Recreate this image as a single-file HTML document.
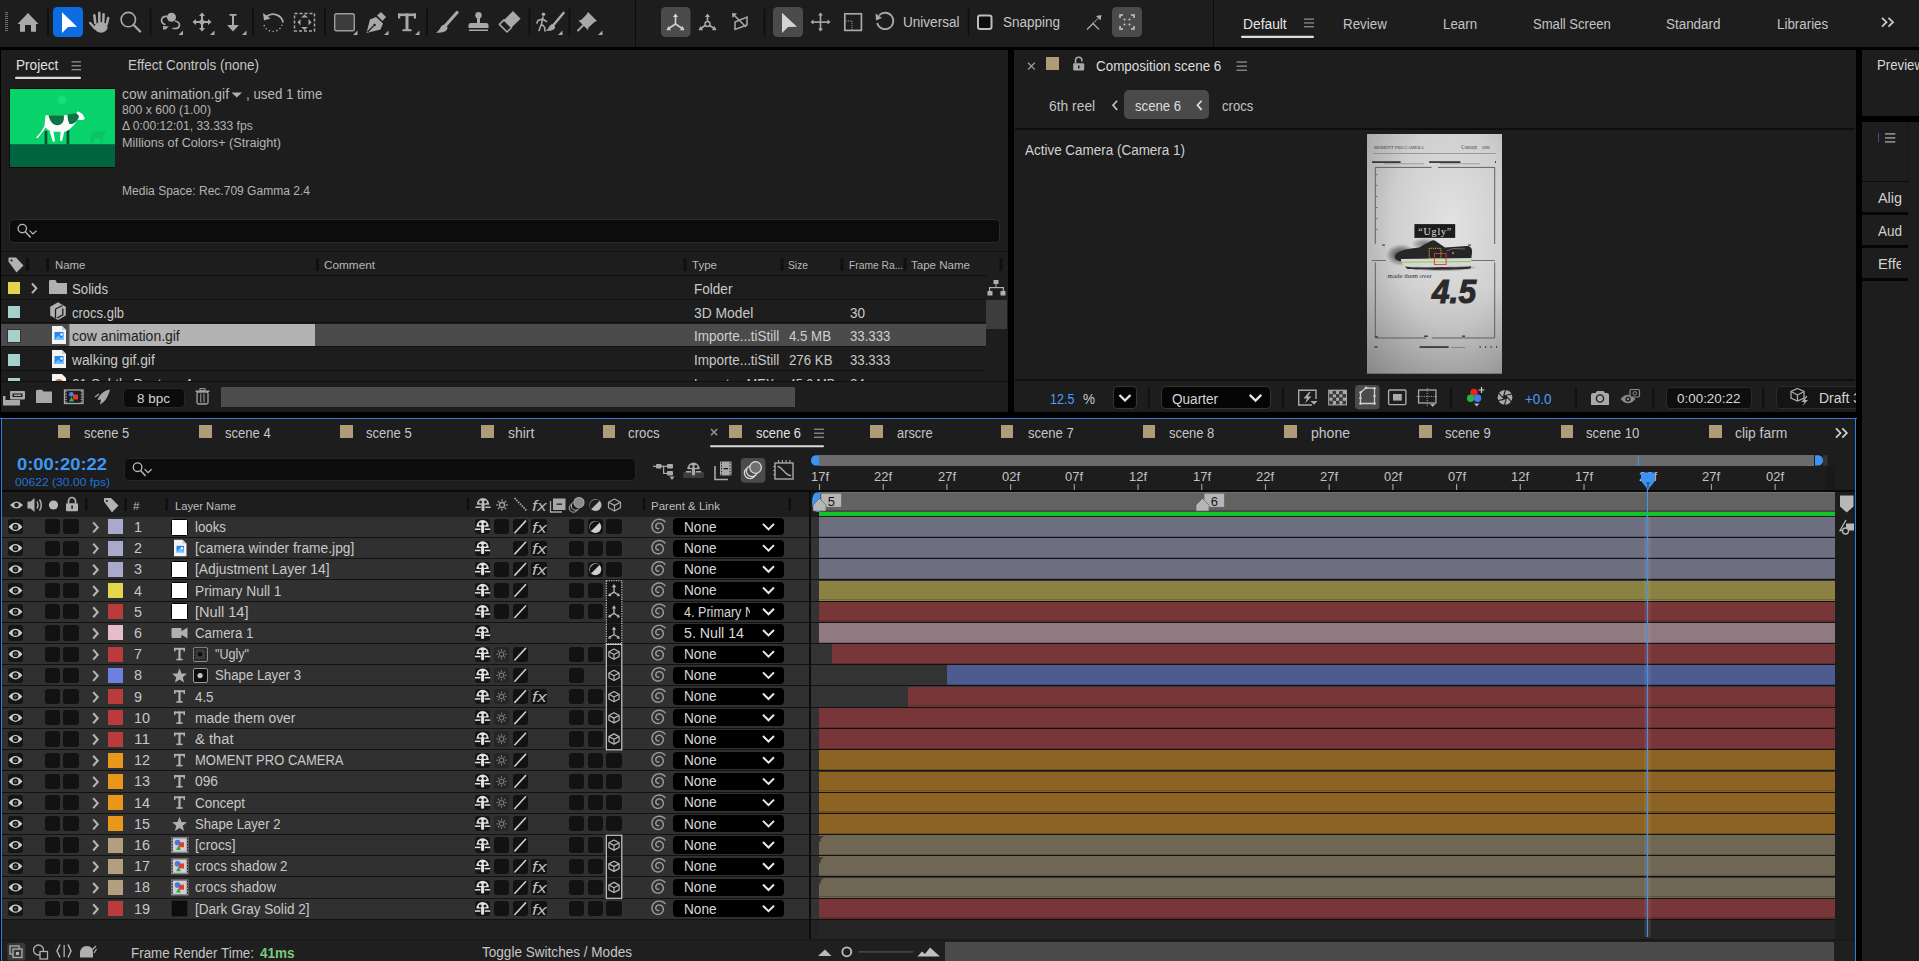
<!DOCTYPE html><html><head><meta charset="utf-8"><title>After Effects</title><style>
html,body{margin:0;padding:0;width:1919px;height:961px;overflow:hidden;background:#1d1d1d;}
body{position:relative;font-family:"Liberation Sans",sans-serif;}
body>div,body>svg{position:absolute;box-sizing:border-box;}
.t{line-height:0;white-space:pre;}

</style></head><body>
<div style="left:0px;top:47px;width:1919px;height:3px;background:#000;"></div>
<div style="left:0px;top:0px;width:1919px;height:47px;background:#1d1d1d;"></div>
<div style="left:635px;top:0px;width:1px;height:47px;background:#0c0c0c;"></div>
<div style="left:1213px;top:0px;width:1px;height:47px;background:#0c0c0c;"></div>
<div style="left:0px;top:50px;width:1919px;height:368px;background:#000;"></div>
<div style="left:1px;top:50px;width:1007px;height:362px;background:#1d1d1d;"></div>
<div style="left:1014px;top:50px;width:842px;height:362px;background:#1d1d1d;"></div>
<div style="left:1862px;top:50px;width:57px;height:66px;background:#1d1d1d;"></div>
<div style="left:1862px;top:122px;width:57px;height:839px;background:#1d1d1d;"></div>
<div style="left:0px;top:418px;width:1862px;height:543px;background:#000;"></div>
<div style="left:1px;top:418px;width:1855px;height:543px;background:#1d1d1d;"></div>
<div class="t" style="left:903.00px;top:22.05px;font-size:14px;color:#c6c6c6;transform:scaleX(0.9681);transform-origin:0 0;">Universal</div>
<div class="t" style="left:1003.00px;top:22.05px;font-size:14px;color:#c6c6c6;transform:scaleX(0.9633);transform-origin:0 0;">Snapping</div>
<div class="t" style="left:1243.00px;top:25.12px;font-size:13.8px;color:#e6e6e6;transform:scaleX(0.9996);transform-origin:0 0;">Default</div>
<div class="t" style="left:1342.80px;top:25.22px;font-size:13.8px;color:#c4c4c4;transform:scaleX(0.9680);transform-origin:0 0;">Review</div>
<div class="t" style="left:1442.80px;top:25.22px;font-size:13.8px;color:#c4c4c4;transform:scaleX(0.9661);transform-origin:0 0;">Learn</div>
<div class="t" style="left:1532.70px;top:25.22px;font-size:13.8px;color:#c4c4c4;transform:scaleX(0.9481);transform-origin:0 0;">Small Screen</div>
<div class="t" style="left:1666.20px;top:25.22px;font-size:13.8px;color:#c4c4c4;transform:scaleX(0.9732);transform-origin:0 0;">Standard</div>
<div class="t" style="left:1776.60px;top:25.22px;font-size:13.8px;color:#c4c4c4;transform:scaleX(0.9675);transform-origin:0 0;">Libraries</div>
<div class="t" style="left:16.20px;top:65.52px;font-size:13.8px;color:#e2e2e2;transform:scaleX(0.9871);transform-origin:0 0;">Project</div>
<div class="t" style="left:127.70px;top:65.52px;font-size:13.8px;color:#c6c6c6;transform:scaleX(0.9780);transform-origin:0 0;">Effect Controls (none)</div>
<div style="left:8.7px;top:87.7px;width:106.6px;height:80.3px;background:#0b0b0b;"></div>
<svg style="left:9.8px;top:88.8px;" width="105" height="78.2" viewBox="0 0 105 78.2"><rect width="105" height="78.2" fill="#08d36a"/><rect y="55.2" width="105" height="23" fill="#01663f"/><circle cx="52.2" cy="10.8" r="4.4" fill="#12e275"/><path d="M80.4,54.5 L81,46 C82,42.5 86,42 92,42.2 L96.8,40 L94.5,45 L93,47 L92.5,54.5 L90.5,54.5 L90,49 L84,49 L83,54.5 Z" fill="#0cc45f"/><path d="M34.6,42 L37.3,42 L37.3,55.2 L34.6,55.2 Z M56.6,41 L59.3,41 L59.3,55.2 L56.6,55.2 Z" fill="#064f30"/><path d="M26,48.5 C30,44.5 33,40.5 34.5,36.5 L35.5,26.3 L55.4,26.3 L66,24.3 L68,22.3 L72.5,25 L75,29.5 L73,31 L67.5,31 C64.5,36 60,41 55,42.8 L44,42.8 C40,42.3 37,40.5 35.5,38.5 C33.5,42.5 30,46.5 27.5,49.3 Z" fill="#fafafa"/><path d="M39.5,42 L43.5,42 L45,52.3 L43,53 Z M50.5,42 L54.5,42 L52,52.3 L50,51.5 Z" fill="#fafafa"/><path d="M38.5,26.3 L53.8,26.3 C54.5,31 53,35.5 48,36.2 C43,36.5 40,33 38.5,26.3 Z" fill="#0b7444"/><path d="M57.5,25.5 L66,24 L69,27 C68,32 64,35.5 59.5,35 C58,32 57.5,29 57.5,25.5 Z" fill="#0b7444"/></svg>
<div class="t" style="left:122.10px;top:95.12px;font-size:13.8px;color:#b8b8b8;transform:scaleX(1.0037);transform-origin:0 0;">cow animation.gif</div>
<div class="t" style="left:245.90px;top:95.12px;font-size:13.8px;color:#b8b8b8;transform:scaleX(0.9658);transform-origin:0 0;">, used 1 time</div>
<div class="t" style="left:122.10px;top:110.14px;font-size:12px;color:#b4b4b4;transform:scaleX(1.0182);transform-origin:0 0;">800 x 600 (1.00)</div>
<div class="t" style="left:122.10px;top:126.34px;font-size:12px;color:#b4b4b4;transform:scaleX(1.0044);transform-origin:0 0;">Δ 0:00:12:01, 33.333 fps</div>
<div class="t" style="left:122.10px;top:142.94px;font-size:12px;color:#b4b4b4;transform:scaleX(1.0525);transform-origin:0 0;">Millions of Colors+ (Straight)</div>
<div class="t" style="left:122.10px;top:191.44px;font-size:12px;color:#b4b4b4;transform:scaleX(1.0030);transform-origin:0 0;">Media Space: Rec.709 Gamma 2.4</div>
<div style="left:9.4px;top:219.2px;width:991px;height:24px;background:#0c0c0c;border:1px solid #2a2a2a;border-radius:5px"></div>
<div style="left:1px;top:251.2px;width:1007px;height:1px;background:#121212;"></div>
<div style="left:1px;top:274.8px;width:985px;height:1px;background:#0c0c0c;"></div>
<div class="t" style="left:55.00px;top:264.91px;font-size:11.8px;color:#b9b9b9;transform:scaleX(0.9660);transform-origin:0 0;">Name</div>
<div class="t" style="left:324.40px;top:264.91px;font-size:11.8px;color:#b9b9b9;transform:scaleX(0.9973);transform-origin:0 0;">Comment</div>
<div class="t" style="left:692.00px;top:264.91px;font-size:11.8px;color:#b9b9b9;transform:scaleX(0.9774);transform-origin:0 0;">Type</div>
<div class="t" style="left:788.00px;top:264.91px;font-size:11.8px;color:#b9b9b9;transform:scaleX(0.8713);transform-origin:0 0;">Size</div>
<div class="t" style="left:848.50px;top:264.91px;font-size:11.8px;color:#b9b9b9;transform:scaleX(0.8702);transform-origin:0 0;">Frame Ra...</div>
<div class="t" style="left:910.60px;top:264.91px;font-size:11.8px;color:#b9b9b9;transform:scaleX(0.9780);transform-origin:0 0;">Tape Name</div>
<div style="left:1px;top:298.5px;width:985px;height:1px;background:#111111;"></div>
<div style="left:1px;top:322.3px;width:985px;height:1px;background:#111111;"></div>
<div style="left:1px;top:346.1px;width:985px;height:1px;background:#111111;"></div>
<div style="left:1px;top:369.9px;width:985px;height:1px;background:#111111;"></div>
<div style="left:1px;top:393.7px;width:985px;height:1px;background:#111111;"></div>
<div style="left:1px;top:323.6px;width:985px;height:22.8px;background:#4b4b4b;"></div>
<div style="left:69.4px;top:323.6px;width:246px;height:22.8px;background:#b3b3b3;"></div>
<div style="left:8px;top:282.4px;width:11.6px;height:11.6px;background:#e3d44b;"></div>
<div class="t" style="left:72.00px;top:289.72px;font-size:13.8px;color:#c9c9c9;transform:scaleX(0.9580);transform-origin:0 0;">Solids</div>
<div class="t" style="left:693.80px;top:289.72px;font-size:13.8px;color:#c9c9c9;transform:scaleX(0.9819);transform-origin:0 0;">Folder</div>
<div style="left:8px;top:305.6px;width:12px;height:12px;background:#a6d0cc;"></div>
<div class="t" style="left:72.20px;top:314.32px;font-size:13.8px;color:#c9c9c9;transform:scaleX(0.9417);transform-origin:0 0;">crocs.glb</div>
<div class="t" style="left:693.80px;top:314.32px;font-size:13.8px;color:#c9c9c9;transform:scaleX(1.0040);transform-origin:0 0;">3D Model</div>
<div class="t" style="left:850.00px;top:314.32px;font-size:13.8px;color:#c9c9c9;transform:scaleX(0.9766);transform-origin:0 0;">30</div>
<div style="left:7.2px;top:329px;width:13.5px;height:13.5px;background:#a6d0cc;border:1px solid #333;"></div>
<div class="t" style="left:72.20px;top:336.82px;font-size:13.8px;color:#1e1e1e;transform:scaleX(1.0107);transform-origin:0 0;">cow animation.gif</div>
<div class="t" style="left:693.80px;top:336.82px;font-size:13.8px;color:#cfcfcf;transform:scaleX(0.9759);transform-origin:0 0;">Importe...tiStill</div>
<div class="t" style="left:789.30px;top:336.82px;font-size:13.8px;color:#cfcfcf;transform:scaleX(0.9607);transform-origin:0 0;">4.5 MB</div>
<div class="t" style="left:850.00px;top:336.82px;font-size:13.8px;color:#cfcfcf;transform:scaleX(0.9549);transform-origin:0 0;">33.333</div>
<div style="left:8px;top:353.7px;width:12px;height:12px;background:#a6d0cc;"></div>
<div class="t" style="left:72.20px;top:360.62px;font-size:13.8px;color:#c9c9c9;transform:scaleX(0.9991);transform-origin:0 0;">walking gif.gif</div>
<div class="t" style="left:693.80px;top:360.62px;font-size:13.8px;color:#c9c9c9;transform:scaleX(0.9759);transform-origin:0 0;">Importe...tiStill</div>
<div class="t" style="left:789.30px;top:360.62px;font-size:13.8px;color:#c9c9c9;transform:scaleX(0.9610);transform-origin:0 0;">276 KB</div>
<div class="t" style="left:850.00px;top:360.62px;font-size:13.8px;color:#c9c9c9;transform:scaleX(0.9549);transform-origin:0 0;">33.333</div>
<div style="left:8px;top:377.5px;width:12px;height:12px;background:#a6d0cc;"></div>
<svg style="left:52px;top:374px;" width="14" height="18" viewBox="0 0 14 18"><path d="M0,0 L10,0 L14,4 L14,18 L0,18 Z" fill="#f4f4f4"/><circle cx="7" cy="9" r="4" fill="#e07030"/></svg>
<div class="t" style="left:72.20px;top:385.22px;font-size:13.8px;color:#c9c9c9;transform:scaleX(0.9902);transform-origin:0 0;">01 Subtle Dust.mp4</div>
<div class="t" style="left:693.80px;top:385.22px;font-size:13.8px;color:#c9c9c9;transform:scaleX(0.9073);transform-origin:0 0;">Importe...MEX</div>
<div class="t" style="left:789.30px;top:385.22px;font-size:13.8px;color:#c9c9c9;transform:scaleX(0.8951);transform-origin:0 0;">45.2 MB</div>
<div class="t" style="left:850.00px;top:385.22px;font-size:13.8px;color:#c9c9c9;transform:scaleX(0.9766);transform-origin:0 0;">24</div>
<div style="left:1px;top:381px;width:1007px;height:31px;background:#1d1d1d;"></div>
<div style="left:1px;top:380.6px;width:1007px;height:1px;background:#101010;"></div>
<div style="left:986px;top:300px;width:21px;height:28.5px;background:#3d3d3d;"></div>
<div style="left:123px;top:387.5px;width:61.5px;height:20.5px;background:#0b0b0b;border:1px solid #262626;border-radius:4px"></div>
<div class="t" style="left:137.00px;top:399.03px;font-size:13.2px;color:#d2d2d2;transform:scaleX(1.0228);transform-origin:0 0;">8 bpc</div>
<div style="left:221px;top:387.2px;width:574px;height:20px;background:#4c4c4c;"></div>
<div style="left:1046px;top:57px;width:13px;height:13px;background:#ad9b7a;"></div>
<div class="t" style="left:1095.60px;top:67.42px;font-size:13.8px;color:#dedede;transform:scaleX(0.9725);transform-origin:0 0;">Composition scene 6</div>
<div class="t" style="left:1049.40px;top:106.82px;font-size:13.8px;color:#c4c4c4;transform:scaleX(1.0037);transform-origin:0 0;">6th reel</div>
<div style="left:1123.75px;top:90px;width:85px;height:29.4px;background:#4a4a4a;border-radius:5px"></div>
<div class="t" style="left:1135.30px;top:106.82px;font-size:13.8px;color:#dedede;transform:scaleX(0.9518);transform-origin:0 0;">scene 6</div>
<div class="t" style="left:1222.00px;top:106.82px;font-size:13.8px;color:#c4c4c4;transform:scaleX(0.9479);transform-origin:0 0;">crocs</div>
<div style="left:1015px;top:128.4px;width:840px;height:1.8px;background:#0e0e0e;"></div>
<div class="t" style="left:1025.20px;top:150.82px;font-size:13.8px;color:#d2d2d2;transform:scaleX(0.9751);transform-origin:0 0;">Active Camera (Camera 1)</div>
<svg style="left:1366.7px;top:134px;" width="135.3" height="239.7" viewBox="0 0 135.3 239.7"><defs><radialGradient id="pg" cx="0.62" cy="0.38" r="0.85"><stop offset="0" stop-color="#e2e2e2"/><stop offset="0.5" stop-color="#cfcfcf"/><stop offset="1" stop-color="#9c9c9c"/></radialGradient><radialGradient id="sh" cx="0.5" cy="0.5" r="0.5"><stop offset="0" stop-color="#000" stop-opacity="0.75"/><stop offset="0.6" stop-color="#000" stop-opacity="0.35"/><stop offset="1" stop-color="#000" stop-opacity="0"/></radialGradient><linearGradient id="bt" x1="0" y1="0" x2="0" y2="1"><stop offset="0" stop-color="#000" stop-opacity="0"/><stop offset="1" stop-color="#000" stop-opacity="0.12"/></linearGradient></defs><rect width="135.3" height="239.7" fill="url(#pg)"/><rect y="150" width="135.3" height="89.7" fill="url(#bt)"/><text x="6.8" y="15.2" font-family="Liberation Serif" font-size="4.6" fill="#444" textLength="50">MOMENT PRO CAMERA</text><text x="94.2" y="15" font-family="Liberation Serif" font-size="5.4" fill="#444" textLength="16" lengthAdjust="spacingAndGlyphs">Concept</text><text x="115" y="15" font-family="Liberation Serif" font-size="4.2" fill="#444" textLength="8" lengthAdjust="spacingAndGlyphs">096</text><rect x="6.8" y="19.2" width="122" height="0.6" fill="#777"/><rect x="5" y="27.2" width="28.6" height="1.8" fill="#3a3a3a"/><rect x="62.2" y="27.2" width="31.2" height="1.8" fill="#3a3a3a"/><rect x="17" y="29.5" width="40" height="0.7" fill="#888"/><rect x="73" y="29.5" width="40" height="0.7" fill="#888"/><rect x="128" y="27" width="1" height="2" fill="#444"/><g fill="none" stroke="#555" stroke-width="0.9"><path d="M8.3,33.4 L8.3,110"/><path d="M127.7,33.4 L127.7,110"/><path d="M8.3,128.5 L8.3,204"/><path d="M127.7,128.5 L127.7,204"/><path d="M8.3,204 L59,204 M65,204 L127.7,204"/><path d="M8.3,33.4 L64.6,33.4 M71,33.4 L127.7,33.4"/></g><g fill="#444"><rect x="9" y="40" width="1.6" height="0.6"/><rect x="9" y="51" width="1.6" height="0.6"/><rect x="9" y="62" width="1.6" height="0.6"/><rect x="9" y="73" width="1.6" height="0.6"/><rect x="9" y="84" width="1.6" height="0.6"/><rect x="9" y="95" width="1.6" height="0.6"/></g><rect x="52.6" y="212.2" width="29" height="1.8" fill="#3a3a3a"/><rect x="7.5" y="212.2" width="3" height="1.6" fill="#444"/><rect x="84" y="213" width="14" height="0.8" fill="#777"/><g fill="#333"><rect x="112.5" y="212.2" width="1.2" height="1.6"/><rect x="118" y="212.2" width="1.2" height="1.6"/><rect x="123.5" y="212.2" width="1.2" height="1.6"/><rect x="129" y="212.2" width="1.2" height="1.6"/></g><rect x="8" y="202" width="3" height="1.5" fill="#444"/><rect x="57" y="201.5" width="4" height="1.5" fill="#444"/><rect x="95" y="201.5" width="3" height="1.5" fill="#444"/><rect x="5" y="126" width="14" height="0.9" fill="#666"/><rect x="92" y="126" width="36" height="0.9" fill="#666"/><rect x="15" y="110.5" width="3" height="1.2" fill="#444"/><rect x="101" y="110.5" width="3" height="1.2" fill="#444"/><ellipse cx="34" cy="121" rx="15" ry="11" fill="url(#sh)"/><ellipse cx="58" cy="110" rx="14" ry="6" fill="url(#sh)" opacity="0.6"/><ellipse cx="75" cy="133.5" rx="36" ry="4" fill="url(#sh)"/><path d="M28,121.5 C32,115.5 42,115 52,113.5 L64,107 C65.5,106 67,106 68.5,107 L78,113.5 L100,112 C104,112 105.5,115 105,119 L104,126.5 L36,127.5 C30,127 27,125 28,121.5 Z" fill="#262626"/><path d="M34,125 L104.5,124 L104,131.5 C90,133.5 50,133.5 38,132 C35,130.5 34,128 34,125 Z" fill="#d6d6d6"/><path d="M35,128.2 L104,127.6" stroke="#8ad03a" stroke-width="1"/><path d="M38,132.5 C50,134.5 90,134.5 104,132.3 L103.5,134.6 C90,136 50,136 40,134.8 Z" fill="#2a2a2a"/><path d="M80,117 L86,114.5 L98,115" stroke="#888" stroke-width="0.7" fill="none"/><circle cx="86" cy="119" r="1.2" fill="#777"/><rect x="62.2" y="114.3" width="11.7" height="10.4" fill="none" stroke="#e3c82a" stroke-width="0.9" stroke-dasharray="1.1 0.8"/><rect x="67.4" y="119.5" width="11.7" height="11.1" fill="none" stroke="#d23a3a" stroke-width="0.9"/><rect x="47.4" y="90.1" width="40.8" height="13.8" fill="#1c1c1c"/><text x="67.8" y="100.8" text-anchor="middle" font-family="Liberation Serif" font-size="10" fill="#e0e0e0" textLength="33">“Ugly”</text><text x="20.6" y="144.5" font-family="Liberation Serif" font-size="6.6" fill="#333" textLength="44.2" lengthAdjust="spacingAndGlyphs">made them over</text><text x="65" y="169.5" font-family="Liberation Sans" font-weight="700" font-style="italic" font-size="34" fill="#2a2a2a" stroke="#2a2a2a" stroke-width="1.1" textLength="44" lengthAdjust="spacingAndGlyphs">4.5</text></svg>
<div style="left:1015px;top:379.4px;width:840px;height:1.2px;background:#101010;"></div>
<div class="t" style="left:1050.00px;top:400.02px;font-size:13.8px;color:#4a9cf6;transform:scaleX(0.9084);transform-origin:0 0;">12.5</div>
<div class="t" style="left:1083.00px;top:400.02px;font-size:13.8px;color:#c8c8c8;transform:scaleX(0.9771);transform-origin:0 0;">%</div>
<div style="left:1113.3px;top:386.3px;width:23.5px;height:22.7px;background:#050505;border:1px solid #353535;border-radius:4px"></div>
<div style="left:1160.6px;top:386.3px;width:110.7px;height:22.7px;background:#050505;border:1px solid #353535;border-radius:4.5px"></div>
<div class="t" style="left:1172.00px;top:400.02px;font-size:13.8px;color:#d6d6d6;transform:scaleX(0.9833);transform-origin:0 0;">Quarter</div>
<div class="t" style="left:1525.00px;top:400.02px;font-size:13.8px;color:#4a9cf6;transform:scaleX(0.9725);transform-origin:0 0;">+0.0</div>
<div style="left:1665.7px;top:386.5px;width:86.1px;height:22.3px;background:#0e0e0e;border:1px solid #2a2a2a;border-radius:4px"></div>
<div class="t" style="left:1677.00px;top:399.23px;font-size:13.2px;color:#d8d8d8;transform:scaleX(1.0185);transform-origin:0 0;">0:00:20:22</div>
<div style="left:1775.6px;top:386px;width:120px;height:23px;background:#141414;border:1px solid #2a2a2a;border-radius:4px"></div>
<div class="t" style="left:1818.50px;top:399.22px;font-size:13.8px;color:#d4d4d4;transform:scaleX(1.0122);transform-origin:0 0;">Draft 3D</div>
<div style="left:1856px;top:380px;width:6px;height:38px;background:#000;"></div>
<div style="left:1862px;top:380px;width:46px;height:38px;background:#1d1d1d;"></div>
<div style="left:1908px;top:380px;width:11px;height:38px;background:#1d1d1d;"></div>
<div class="t" style="left:1877.00px;top:66.22px;font-size:13.8px;color:#d8d8d8;transform:scaleX(0.9577);transform-origin:0 0;">Preview</div>
<div style="left:1856px;top:50px;width:6px;height:368px;background:#000;"></div>
<div style="left:1856px;top:116px;width:63px;height:6px;background:#000;"></div>
<div style="left:1878px;top:132.5px;width:1.2px;height:9.5px;background:#3e4f99;"></div>
<div style="left:1907.5px;top:122px;width:1px;height:59px;background:#171717;"></div>
<div style="left:1862px;top:180.6px;width:46px;height:1.2px;background:#0a0a0a;"></div>
<div class="t" style="left:1877.50px;top:199.32px;font-size:13.8px;color:#d0d0d0;transform:scaleX(1.0428);transform-origin:0 0;">Alig</div>
<div class="t" style="left:1877.50px;top:232.02px;font-size:13.8px;color:#d0d0d0;transform:scaleX(0.9771);transform-origin:0 0;">Aud</div>
<div class="t" style="left:1877.50px;top:264.72px;font-size:13.8px;color:#d0d0d0;transform:scaleX(1.0701);transform-origin:0 0;">Effe</div>
<div style="left:1900.6px;top:250px;width:8px;height:25px;background:#1d1d1d;"></div>
<div style="left:1862px;top:212.2px;width:46px;height:2.8px;background:#050505;"></div>
<div style="left:1862px;top:245.2px;width:46px;height:2.8px;background:#050505;"></div>
<div style="left:1862px;top:278.2px;width:46px;height:2.8px;background:#050505;"></div>
<div style="left:0px;top:418px;width:1857px;height:1.3px;background:#2d7fd8;"></div>
<div style="left:1px;top:418px;width:1.2px;height:543px;background:#2d7fd8;"></div>
<div style="left:1855px;top:418px;width:1.2px;height:543px;background:#2d7fd8;"></div>
<div style="left:57.7px;top:425.3px;width:12.7px;height:12.7px;background:#ad9b7a;"></div>
<div class="t" style="left:84.00px;top:433.62px;font-size:13.8px;color:#c6c6c6;transform:scaleX(0.9373);transform-origin:0 0;">scene 5</div>
<div style="left:199px;top:425.3px;width:12.7px;height:12.7px;background:#ad9b7a;"></div>
<div class="t" style="left:225.00px;top:433.62px;font-size:13.8px;color:#c6c6c6;transform:scaleX(0.9456);transform-origin:0 0;">scene 4</div>
<div style="left:340px;top:425.3px;width:12.7px;height:12.7px;background:#ad9b7a;"></div>
<div class="t" style="left:366.00px;top:433.62px;font-size:13.8px;color:#c6c6c6;transform:scaleX(0.9456);transform-origin:0 0;">scene 5</div>
<div style="left:481px;top:425.3px;width:12.7px;height:12.7px;background:#ad9b7a;"></div>
<div class="t" style="left:507.70px;top:433.62px;font-size:13.8px;color:#c6c6c6;transform:scaleX(1.0085);transform-origin:0 0;">shirt</div>
<div style="left:602.7px;top:425.3px;width:12.7px;height:12.7px;background:#ad9b7a;"></div>
<div class="t" style="left:628.30px;top:433.62px;font-size:13.8px;color:#c6c6c6;transform:scaleX(0.9615);transform-origin:0 0;">crocs</div>
<div style="left:729px;top:425.3px;width:12.7px;height:12.7px;background:#ad9b7a;"></div>
<div class="t" style="left:755.70px;top:433.62px;font-size:13.8px;color:#e2e2e2;transform:scaleX(0.9311);transform-origin:0 0;">scene 6</div>
<div style="left:870px;top:425.3px;width:12.7px;height:12.7px;background:#ad9b7a;"></div>
<div class="t" style="left:896.70px;top:433.62px;font-size:13.8px;color:#c6c6c6;transform:scaleX(0.9311);transform-origin:0 0;">arscre</div>
<div style="left:1000.7px;top:425.3px;width:12.7px;height:12.7px;background:#ad9b7a;"></div>
<div class="t" style="left:1027.70px;top:433.62px;font-size:13.8px;color:#c6c6c6;transform:scaleX(0.9456);transform-origin:0 0;">scene 7</div>
<div style="left:1142.7px;top:425.3px;width:12.7px;height:12.7px;background:#ad9b7a;"></div>
<div class="t" style="left:1169.00px;top:433.62px;font-size:13.8px;color:#c6c6c6;transform:scaleX(0.9373);transform-origin:0 0;">scene 8</div>
<div style="left:1284px;top:425.3px;width:12.7px;height:12.7px;background:#ad9b7a;"></div>
<div class="t" style="left:1310.70px;top:433.62px;font-size:13.8px;color:#c6c6c6;transform:scaleX(1.0163);transform-origin:0 0;">phone</div>
<div style="left:1419px;top:425.3px;width:12.7px;height:12.7px;background:#ad9b7a;"></div>
<div class="t" style="left:1445.00px;top:433.62px;font-size:13.8px;color:#c6c6c6;transform:scaleX(0.9456);transform-origin:0 0;">scene 9</div>
<div style="left:1560.5px;top:425.3px;width:12.7px;height:12.7px;background:#ad9b7a;"></div>
<div class="t" style="left:1586.30px;top:433.62px;font-size:13.8px;color:#c6c6c6;transform:scaleX(0.9518);transform-origin:0 0;">scene 10</div>
<div style="left:1709px;top:425.3px;width:12.7px;height:12.7px;background:#ad9b7a;"></div>
<div class="t" style="left:1735.00px;top:433.62px;font-size:13.8px;color:#c6c6c6;transform:scaleX(1.0031);transform-origin:0 0;">clip farm</div>
<div class="t" style="left:17.00px;top:464.85px;font-size:16.6px;color:#3b99f3;font-weight:700;transform:scaleX(1.1085);transform-origin:0 0;">0:00:20:22</div>
<div class="t" style="left:15.00px;top:481.51px;font-size:11.8px;color:#1f72d4;transform:scaleX(1.0272);transform-origin:0 0;">00622 (30.00 fps)</div>
<div style="left:124.4px;top:457.5px;width:512px;height:23.2px;background:#0c0c0c;border:1px solid #252525;border-radius:5px"></div>
<div style="left:2px;top:490.2px;width:1853px;height:2.2px;background:#0a0a0a;"></div>
<div class="t" style="left:133.00px;top:505.91px;font-size:11.8px;color:#b8b8b8;transform:scaleX(0.9905);transform-origin:0 0;">#</div>
<div class="t" style="left:174.50px;top:505.91px;font-size:11.8px;color:#bcbcbc;transform:scaleX(0.9492);transform-origin:0 0;">Layer Name</div>
<div class="t" style="left:531.80px;top:505.83px;font-size:15.5px;color:#b4b4b4;transform:scaleX(1.2021);transform-origin:0 0;font-style:italic;">fx</div>
<div class="t" style="left:651.00px;top:505.71px;font-size:11.8px;color:#bcbcbc;transform:scaleX(0.9742);transform-origin:0 0;">Parent &amp; Link</div>
<div style="left:809px;top:449px;width:2px;height:42px;background:#1d1d1d;"></div>
<div style="left:819px;top:455.2px;width:995px;height:10.4px;background:#6b6b6b;"></div>
<div class="t" style="left:810.50px;top:476.54px;font-size:12.3px;color:#c4c4c4;transform:scaleX(1.0521);transform-origin:0 0;">17f</div>
<div class="t" style="left:874.21px;top:476.54px;font-size:12.3px;color:#c4c4c4;transform:scaleX(1.0521);transform-origin:0 0;">22f</div>
<div class="t" style="left:937.92px;top:476.54px;font-size:12.3px;color:#c4c4c4;transform:scaleX(1.0521);transform-origin:0 0;">27f</div>
<div class="t" style="left:1001.63px;top:476.54px;font-size:12.3px;color:#c4c4c4;transform:scaleX(1.0521);transform-origin:0 0;">02f</div>
<div class="t" style="left:1065.34px;top:476.54px;font-size:12.3px;color:#c4c4c4;transform:scaleX(1.0521);transform-origin:0 0;">07f</div>
<div class="t" style="left:1129.05px;top:476.54px;font-size:12.3px;color:#c4c4c4;transform:scaleX(1.0521);transform-origin:0 0;">12f</div>
<div class="t" style="left:1192.76px;top:476.54px;font-size:12.3px;color:#c4c4c4;transform:scaleX(1.0521);transform-origin:0 0;">17f</div>
<div class="t" style="left:1256.47px;top:476.54px;font-size:12.3px;color:#c4c4c4;transform:scaleX(1.0521);transform-origin:0 0;">22f</div>
<div class="t" style="left:1320.18px;top:476.54px;font-size:12.3px;color:#c4c4c4;transform:scaleX(1.0521);transform-origin:0 0;">27f</div>
<div class="t" style="left:1383.89px;top:476.54px;font-size:12.3px;color:#c4c4c4;transform:scaleX(1.0521);transform-origin:0 0;">02f</div>
<div class="t" style="left:1447.60px;top:476.54px;font-size:12.3px;color:#c4c4c4;transform:scaleX(1.0521);transform-origin:0 0;">07f</div>
<div class="t" style="left:1511.31px;top:476.54px;font-size:12.3px;color:#c4c4c4;transform:scaleX(1.0521);transform-origin:0 0;">12f</div>
<div class="t" style="left:1575.02px;top:476.54px;font-size:12.3px;color:#c4c4c4;transform:scaleX(1.0521);transform-origin:0 0;">17f</div>
<div class="t" style="left:1638.73px;top:476.54px;font-size:12.3px;color:#c4c4c4;transform:scaleX(1.0521);transform-origin:0 0;">22f</div>
<div class="t" style="left:1702.44px;top:476.54px;font-size:12.3px;color:#c4c4c4;transform:scaleX(1.0521);transform-origin:0 0;">27f</div>
<div class="t" style="left:1766.15px;top:476.54px;font-size:12.3px;color:#c4c4c4;transform:scaleX(1.0521);transform-origin:0 0;">02f</div>
<div class="t" style="left:1829.80px;top:476.54px;font-size:12.3px;color:#c4c4c4;transform:scaleX(1.0228);transform-origin:0 0;">0</div>
<div style="left:1835px;top:449px;width:20px;height:41px;background:#1d1d1d;"></div>
<div style="left:811px;top:492.4px;width:8px;height:19.8px;background:#1d1d1d;"></div>
<div style="left:819px;top:492.2px;width:1016px;height:19.5px;background:#626262;"></div>
<div style="left:819px;top:492.2px;width:1016px;height:1px;background:#727272;"></div>
<div style="left:819px;top:510.2px;width:1016px;height:1.6px;background:#4a4a4a;"></div>
<div style="left:819px;top:511.8px;width:1016px;height:4px;background:#14c424;"></div>
<div style="left:1835px;top:492.4px;width:20px;height:24px;background:#1d1d1d;"></div>
<div style="left:1835px;top:515.6px;width:20px;height:1.2px;background:#111;"></div>
<div style="left:1826px;top:466px;width:9px;height:24px;background:#191919;"></div>
<div style="left:2px;top:516.8px;width:808px;height:20.21px;background:#303030;"></div>
<div style="left:811px;top:516.8px;width:1024px;height:20.21px;background:#333333;"></div>
<div style="left:2px;top:537.01px;width:1833px;height:1px;background:#121212;"></div>
<div style="left:819px;top:517.0px;width:1016px;height:20.01px;background:#6e6e81;"></div>
<div style="left:819px;top:535.61px;width:1016px;height:1.2px;background:rgba(0,0,0,0.18);"></div>
<div style="left:7.5px;top:519.3px;width:15.5px;height:15.2px;background:#151515;border-radius:3px"></div>
<div style="left:45px;top:519.3px;width:15.3px;height:15.2px;background:#121212;border-radius:3px"></div>
<div style="left:63.3px;top:519.3px;width:15.3px;height:15.2px;background:#121212;border-radius:3px"></div>
<div style="left:108px;top:519.4px;width:15px;height:15px;background:#a9a9cb;"></div>
<div class="t" style="left:134.00px;top:527.92px;font-size:13.8px;color:#c6c6c6;transform:scaleX(1.0407);transform-origin:0 0;">1</div>
<div style="left:171px;top:518.5px;width:17.2px;height:17px;background:#fff;border:1.2px solid #000;border-radius:1.5px"></div>
<div class="t" style="left:194.80px;top:527.92px;font-size:13.8px;color:#c8c8c8;transform:scaleX(0.9622);transform-origin:0 0;">looks</div>
<div style="left:475px;top:519.3px;width:15.2px;height:15.2px;background:#161616;border-radius:3px"></div>
<div style="left:493.9px;top:519.3px;width:15.2px;height:15.2px;background:#121212;border-radius:3px"></div>
<div style="left:512.6px;top:519.3px;width:15.2px;height:15.2px;background:#121212;border-radius:3px"></div>
<div style="left:531.4px;top:519.3px;width:15.2px;height:15.2px;background:#121212;border-radius:3px"></div>
<div class="t" style="left:532.00px;top:527.73px;font-size:15.5px;color:#bdbdbd;transform:scaleX(1.2021);transform-origin:0 0;font-style:italic;">fx</div>
<div style="left:568.9px;top:519.3px;width:15.2px;height:15.2px;background:#121212;border-radius:3px"></div>
<div style="left:587.7px;top:519.3px;width:15.2px;height:15.2px;background:#121212;border-radius:3px"></div>
<div style="left:606.4px;top:519.3px;width:15.2px;height:15.2px;background:#121212;border-radius:3px"></div>
<div style="left:673.3px;top:518.3px;width:110.6px;height:17.2px;background:#000;border-radius:4px"></div>
<div class="t" style="left:684.00px;top:527.72px;font-size:13.8px;color:#d8d8d8;transform:scaleX(0.9853);transform-origin:0 0;">None</div>
<div style="left:2px;top:538.01px;width:808px;height:20.21px;background:#303030;"></div>
<div style="left:811px;top:538.01px;width:1024px;height:20.21px;background:#333333;"></div>
<div style="left:2px;top:558.22px;width:1833px;height:1px;background:#121212;"></div>
<div style="left:819px;top:538.21px;width:1016px;height:20.01px;background:#6e6e81;"></div>
<div style="left:819px;top:556.82px;width:1016px;height:1.2px;background:rgba(0,0,0,0.18);"></div>
<div style="left:7.5px;top:540.51px;width:15.5px;height:15.2px;background:#151515;border-radius:3px"></div>
<div style="left:45px;top:540.51px;width:15.3px;height:15.2px;background:#121212;border-radius:3px"></div>
<div style="left:63.3px;top:540.51px;width:15.3px;height:15.2px;background:#121212;border-radius:3px"></div>
<div style="left:108px;top:540.61px;width:15px;height:15px;background:#a9a9cb;"></div>
<div class="t" style="left:134.00px;top:549.13px;font-size:13.8px;color:#c6c6c6;transform:scaleX(1.0407);transform-origin:0 0;">2</div>
<div class="t" style="left:194.80px;top:549.13px;font-size:13.8px;color:#c8c8c8;transform:scaleX(0.9987);transform-origin:0 0;">[camera winder frame.jpg]</div>
<div style="left:475px;top:540.51px;width:15.2px;height:15.2px;background:#161616;border-radius:3px"></div>
<div style="left:512.6px;top:540.51px;width:15.2px;height:15.2px;background:#121212;border-radius:3px"></div>
<div style="left:531.4px;top:540.51px;width:15.2px;height:15.2px;background:#121212;border-radius:3px"></div>
<div class="t" style="left:532.00px;top:548.94px;font-size:15.5px;color:#bdbdbd;transform:scaleX(1.2021);transform-origin:0 0;font-style:italic;">fx</div>
<div style="left:568.9px;top:540.51px;width:15.2px;height:15.2px;background:#121212;border-radius:3px"></div>
<div style="left:587.7px;top:540.51px;width:15.2px;height:15.2px;background:#121212;border-radius:3px"></div>
<div style="left:606.4px;top:540.51px;width:15.2px;height:15.2px;background:#121212;border-radius:3px"></div>
<div style="left:673.3px;top:539.51px;width:110.6px;height:17.2px;background:#000;border-radius:4px"></div>
<div class="t" style="left:684.00px;top:548.93px;font-size:13.8px;color:#d8d8d8;transform:scaleX(0.9853);transform-origin:0 0;">None</div>
<div style="left:2px;top:559.2199999999999px;width:808px;height:20.21px;background:#303030;"></div>
<div style="left:811px;top:559.2199999999999px;width:1024px;height:20.21px;background:#333333;"></div>
<div style="left:2px;top:579.43px;width:1833px;height:1px;background:#121212;"></div>
<div style="left:819px;top:559.42px;width:1016px;height:20.01px;background:#6e6e81;"></div>
<div style="left:819px;top:578.03px;width:1016px;height:1.2px;background:rgba(0,0,0,0.18);"></div>
<div style="left:7.5px;top:561.7199999999999px;width:15.5px;height:15.2px;background:#151515;border-radius:3px"></div>
<div style="left:45px;top:561.7199999999999px;width:15.3px;height:15.2px;background:#121212;border-radius:3px"></div>
<div style="left:63.3px;top:561.7199999999999px;width:15.3px;height:15.2px;background:#121212;border-radius:3px"></div>
<div style="left:108px;top:561.8199999999999px;width:15px;height:15px;background:#a9a9cb;"></div>
<div class="t" style="left:134.00px;top:570.34px;font-size:13.8px;color:#c6c6c6;transform:scaleX(1.0407);transform-origin:0 0;">3</div>
<div style="left:171px;top:560.92px;width:17.2px;height:17px;background:#fff;border:1.2px solid #000;border-radius:1.5px"></div>
<div class="t" style="left:194.80px;top:570.34px;font-size:13.8px;color:#c8c8c8;transform:scaleX(1.0021);transform-origin:0 0;">[Adjustment Layer 14]</div>
<div style="left:475px;top:561.7199999999999px;width:15.2px;height:15.2px;background:#161616;border-radius:3px"></div>
<div style="left:493.9px;top:561.7199999999999px;width:15.2px;height:15.2px;background:#121212;border-radius:3px"></div>
<div style="left:512.6px;top:561.7199999999999px;width:15.2px;height:15.2px;background:#121212;border-radius:3px"></div>
<div style="left:531.4px;top:561.7199999999999px;width:15.2px;height:15.2px;background:#121212;border-radius:3px"></div>
<div class="t" style="left:532.00px;top:570.15px;font-size:15.5px;color:#bdbdbd;transform:scaleX(1.2021);transform-origin:0 0;font-style:italic;">fx</div>
<div style="left:568.9px;top:561.7199999999999px;width:15.2px;height:15.2px;background:#121212;border-radius:3px"></div>
<div style="left:587.7px;top:561.7199999999999px;width:15.2px;height:15.2px;background:#121212;border-radius:3px"></div>
<div style="left:606.4px;top:561.7199999999999px;width:15.2px;height:15.2px;background:#121212;border-radius:3px"></div>
<div style="left:673.3px;top:560.7199999999999px;width:110.6px;height:17.2px;background:#000;border-radius:4px"></div>
<div class="t" style="left:684.00px;top:570.14px;font-size:13.8px;color:#d8d8d8;transform:scaleX(0.9853);transform-origin:0 0;">None</div>
<div style="left:2px;top:580.43px;width:808px;height:20.21px;background:#303030;"></div>
<div style="left:811px;top:580.43px;width:1024px;height:20.21px;background:#333333;"></div>
<div style="left:2px;top:600.64px;width:1833px;height:1px;background:#121212;"></div>
<div style="left:819px;top:580.63px;width:1016px;height:20.01px;background:#8b8143;"></div>
<div style="left:819px;top:599.24px;width:1016px;height:1.2px;background:rgba(0,0,0,0.18);"></div>
<div style="left:7.5px;top:582.93px;width:15.5px;height:15.2px;background:#151515;border-radius:3px"></div>
<div style="left:45px;top:582.93px;width:15.3px;height:15.2px;background:#121212;border-radius:3px"></div>
<div style="left:63.3px;top:582.93px;width:15.3px;height:15.2px;background:#121212;border-radius:3px"></div>
<div style="left:108px;top:583.03px;width:15px;height:15px;background:#e2d64c;"></div>
<div class="t" style="left:134.00px;top:591.55px;font-size:13.8px;color:#c6c6c6;transform:scaleX(1.0407);transform-origin:0 0;">4</div>
<div style="left:171px;top:582.13px;width:17.2px;height:17px;background:#fff;border:1.2px solid #000;border-radius:1.5px"></div>
<div class="t" style="left:194.80px;top:591.55px;font-size:13.8px;color:#c8c8c8;transform:scaleX(0.9984);transform-origin:0 0;">Primary Null 1</div>
<div style="left:475px;top:582.93px;width:15.2px;height:15.2px;background:#161616;border-radius:3px"></div>
<div style="left:493.9px;top:582.93px;width:15.2px;height:15.2px;background:#121212;border-radius:3px"></div>
<div style="left:512.6px;top:582.93px;width:15.2px;height:15.2px;background:#121212;border-radius:3px"></div>
<div style="left:568.9px;top:582.93px;width:15.2px;height:15.2px;background:#121212;border-radius:3px"></div>
<div style="left:587.7px;top:582.93px;width:15.2px;height:15.2px;background:#121212;border-radius:3px"></div>
<div style="left:673.3px;top:581.93px;width:110.6px;height:17.2px;background:#000;border-radius:4px"></div>
<div class="t" style="left:684.00px;top:591.35px;font-size:13.8px;color:#d8d8d8;transform:scaleX(0.9853);transform-origin:0 0;">None</div>
<div style="left:2px;top:601.64px;width:808px;height:20.21px;background:#303030;"></div>
<div style="left:811px;top:601.64px;width:1024px;height:20.21px;background:#333333;"></div>
<div style="left:2px;top:621.85px;width:1833px;height:1px;background:#121212;"></div>
<div style="left:819px;top:601.84px;width:1016px;height:20.01px;background:#783638;"></div>
<div style="left:819px;top:620.45px;width:1016px;height:1.2px;background:rgba(0,0,0,0.18);"></div>
<div style="left:7.5px;top:604.14px;width:15.5px;height:15.2px;background:#151515;border-radius:3px"></div>
<div style="left:45px;top:604.14px;width:15.3px;height:15.2px;background:#121212;border-radius:3px"></div>
<div style="left:63.3px;top:604.14px;width:15.3px;height:15.2px;background:#121212;border-radius:3px"></div>
<div style="left:108px;top:604.24px;width:15px;height:15px;background:#b93b3b;"></div>
<div class="t" style="left:134.00px;top:612.76px;font-size:13.8px;color:#c6c6c6;transform:scaleX(1.0407);transform-origin:0 0;">5</div>
<div style="left:171px;top:603.34px;width:17.2px;height:17px;background:#fff;border:1.2px solid #000;border-radius:1.5px"></div>
<div class="t" style="left:194.80px;top:612.76px;font-size:13.8px;color:#c8c8c8;transform:scaleX(1.0568);transform-origin:0 0;">[Null 14]</div>
<div style="left:475px;top:604.14px;width:15.2px;height:15.2px;background:#161616;border-radius:3px"></div>
<div style="left:493.9px;top:604.14px;width:15.2px;height:15.2px;background:#121212;border-radius:3px"></div>
<div style="left:512.6px;top:604.14px;width:15.2px;height:15.2px;background:#121212;border-radius:3px"></div>
<div style="left:568.9px;top:604.14px;width:15.2px;height:15.2px;background:#121212;border-radius:3px"></div>
<div style="left:587.7px;top:604.14px;width:15.2px;height:15.2px;background:#121212;border-radius:3px"></div>
<div style="left:673.3px;top:603.14px;width:110.6px;height:17.2px;background:#000;border-radius:4px"></div>
<div class="t" style="left:684.00px;top:612.56px;font-size:13.8px;color:#d8d8d8;transform:scaleX(0.9130);transform-origin:0 0;">4. Primary N</div>
<div style="left:750px;top:603.14px;width:12px;height:17.2px;background:#000;"></div>
<div style="left:2px;top:622.8499999999999px;width:808px;height:20.21px;background:#303030;"></div>
<div style="left:811px;top:622.8499999999999px;width:1024px;height:20.21px;background:#333333;"></div>
<div style="left:2px;top:643.06px;width:1833px;height:1px;background:#121212;"></div>
<div style="left:819px;top:623.05px;width:1016px;height:20.01px;background:#8f7a81;"></div>
<div style="left:819px;top:641.66px;width:1016px;height:1.2px;background:rgba(0,0,0,0.18);"></div>
<div style="left:7.5px;top:625.3499999999999px;width:15.5px;height:15.2px;background:#151515;border-radius:3px"></div>
<div style="left:45px;top:625.3499999999999px;width:15.3px;height:15.2px;background:#121212;border-radius:3px"></div>
<div style="left:63.3px;top:625.3499999999999px;width:15.3px;height:15.2px;background:#121212;border-radius:3px"></div>
<div style="left:108px;top:625.4499999999999px;width:15px;height:15px;background:#e6bdc8;"></div>
<div class="t" style="left:134.00px;top:633.97px;font-size:13.8px;color:#c6c6c6;transform:scaleX(1.0407);transform-origin:0 0;">6</div>
<div class="t" style="left:194.80px;top:633.97px;font-size:13.8px;color:#c8c8c8;transform:scaleX(0.9657);transform-origin:0 0;">Camera 1</div>
<div style="left:475px;top:625.3499999999999px;width:15.2px;height:15.2px;background:#161616;border-radius:3px"></div>
<div style="left:673.3px;top:624.3499999999999px;width:110.6px;height:17.2px;background:#000;border-radius:4px"></div>
<div class="t" style="left:684.00px;top:633.77px;font-size:13.8px;color:#d8d8d8;transform:scaleX(1.0292);transform-origin:0 0;">5. Null 14</div>
<div style="left:2px;top:644.06px;width:808px;height:20.21px;background:#303030;"></div>
<div style="left:811px;top:644.06px;width:1024px;height:20.21px;background:#333333;"></div>
<div style="left:2px;top:664.27px;width:1833px;height:1px;background:#121212;"></div>
<div style="left:832px;top:644.26px;width:1003px;height:20.01px;background:#783638;"></div>
<div style="left:832px;top:662.87px;width:1003px;height:1.2px;background:rgba(0,0,0,0.18);"></div>
<div style="left:7.5px;top:646.56px;width:15.5px;height:15.2px;background:#151515;border-radius:3px"></div>
<div style="left:45px;top:646.56px;width:15.3px;height:15.2px;background:#121212;border-radius:3px"></div>
<div style="left:63.3px;top:646.56px;width:15.3px;height:15.2px;background:#121212;border-radius:3px"></div>
<div style="left:108px;top:646.66px;width:15px;height:15px;background:#b93b3b;"></div>
<div class="t" style="left:134.00px;top:655.18px;font-size:13.8px;color:#c6c6c6;transform:scaleX(1.0407);transform-origin:0 0;">7</div>
<div style="left:192.6px;top:646.56px;width:15px;height:15.4px;background:#3a3a3a;border:1.5px solid #8c8c8c;border-radius:2px"></div>
<div class="t" style="left:214.70px;top:655.18px;font-size:13.8px;color:#c8c8c8;transform:scaleX(0.9089);transform-origin:0 0;">&quot;Ugly&quot;</div>
<div style="left:475px;top:646.56px;width:15.2px;height:15.2px;background:#161616;border-radius:3px"></div>
<div style="left:493.9px;top:646.56px;width:15.2px;height:15.2px;background:#262626;border-radius:3px"></div>
<div style="left:512.6px;top:646.56px;width:15.2px;height:15.2px;background:#121212;border-radius:3px"></div>
<div style="left:568.9px;top:646.56px;width:15.2px;height:15.2px;background:#121212;border-radius:3px"></div>
<div style="left:587.7px;top:646.56px;width:15.2px;height:15.2px;background:#121212;border-radius:3px"></div>
<div style="left:673.3px;top:645.56px;width:110.6px;height:17.2px;background:#000;border-radius:4px"></div>
<div class="t" style="left:684.00px;top:654.98px;font-size:13.8px;color:#d8d8d8;transform:scaleX(0.9853);transform-origin:0 0;">None</div>
<div style="left:2px;top:665.27px;width:808px;height:20.21px;background:#303030;"></div>
<div style="left:811px;top:665.27px;width:1024px;height:20.21px;background:#333333;"></div>
<div style="left:2px;top:685.48px;width:1833px;height:1px;background:#121212;"></div>
<div style="left:947px;top:665.47px;width:888px;height:20.01px;background:#4e5b90;"></div>
<div style="left:947px;top:684.08px;width:888px;height:1.2px;background:rgba(0,0,0,0.18);"></div>
<div style="left:7.5px;top:667.77px;width:15.5px;height:15.2px;background:#151515;border-radius:3px"></div>
<div style="left:45px;top:667.77px;width:15.3px;height:15.2px;background:#121212;border-radius:3px"></div>
<div style="left:63.3px;top:667.77px;width:15.3px;height:15.2px;background:#121212;border-radius:3px"></div>
<div style="left:108px;top:667.87px;width:15px;height:15px;background:#6b80e2;"></div>
<div class="t" style="left:134.00px;top:676.39px;font-size:13.8px;color:#c6c6c6;transform:scaleX(1.0407);transform-origin:0 0;">8</div>
<div style="left:192.6px;top:667.77px;width:15px;height:15.4px;background:#0e0e0e;border:1.5px solid #9a9a9a;border-radius:2px"></div>
<div class="t" style="left:214.70px;top:676.39px;font-size:13.8px;color:#c8c8c8;transform:scaleX(0.9582);transform-origin:0 0;">Shape Layer 3</div>
<div style="left:475px;top:667.77px;width:15.2px;height:15.2px;background:#161616;border-radius:3px"></div>
<div style="left:493.9px;top:667.77px;width:15.2px;height:15.2px;background:#262626;border-radius:3px"></div>
<div style="left:512.6px;top:667.77px;width:15.2px;height:15.2px;background:#121212;border-radius:3px"></div>
<div style="left:568.9px;top:667.77px;width:15.2px;height:15.2px;background:#121212;border-radius:3px"></div>
<div style="left:673.3px;top:666.77px;width:110.6px;height:17.2px;background:#000;border-radius:4px"></div>
<div class="t" style="left:684.00px;top:676.19px;font-size:13.8px;color:#d8d8d8;transform:scaleX(0.9853);transform-origin:0 0;">None</div>
<div style="left:2px;top:686.48px;width:808px;height:20.21px;background:#303030;"></div>
<div style="left:811px;top:686.48px;width:1024px;height:20.21px;background:#333333;"></div>
<div style="left:2px;top:706.69px;width:1833px;height:1px;background:#121212;"></div>
<div style="left:908px;top:686.6800000000001px;width:927px;height:20.01px;background:#783638;"></div>
<div style="left:908px;top:705.2900000000001px;width:927px;height:1.2px;background:rgba(0,0,0,0.18);"></div>
<div style="left:7.5px;top:688.98px;width:15.5px;height:15.2px;background:#151515;border-radius:3px"></div>
<div style="left:45px;top:688.98px;width:15.3px;height:15.2px;background:#121212;border-radius:3px"></div>
<div style="left:63.3px;top:688.98px;width:15.3px;height:15.2px;background:#121212;border-radius:3px"></div>
<div style="left:108px;top:689.08px;width:15px;height:15px;background:#b93b3b;"></div>
<div class="t" style="left:134.00px;top:697.60px;font-size:13.8px;color:#c6c6c6;transform:scaleX(1.0407);transform-origin:0 0;">9</div>
<div class="t" style="left:194.80px;top:697.60px;font-size:13.8px;color:#c8c8c8;transform:scaleX(0.9642);transform-origin:0 0;">4.5</div>
<div style="left:475px;top:688.98px;width:15.2px;height:15.2px;background:#161616;border-radius:3px"></div>
<div style="left:493.9px;top:688.98px;width:15.2px;height:15.2px;background:#262626;border-radius:3px"></div>
<div style="left:512.6px;top:688.98px;width:15.2px;height:15.2px;background:#121212;border-radius:3px"></div>
<div style="left:531.4px;top:688.98px;width:15.2px;height:15.2px;background:#121212;border-radius:3px"></div>
<div class="t" style="left:532.00px;top:697.41px;font-size:15.5px;color:#bdbdbd;transform:scaleX(1.2021);transform-origin:0 0;font-style:italic;">fx</div>
<div style="left:568.9px;top:688.98px;width:15.2px;height:15.2px;background:#121212;border-radius:3px"></div>
<div style="left:587.7px;top:688.98px;width:15.2px;height:15.2px;background:#121212;border-radius:3px"></div>
<div style="left:673.3px;top:687.98px;width:110.6px;height:17.2px;background:#000;border-radius:4px"></div>
<div class="t" style="left:684.00px;top:697.40px;font-size:13.8px;color:#d8d8d8;transform:scaleX(0.9853);transform-origin:0 0;">None</div>
<div style="left:2px;top:707.6899999999999px;width:808px;height:20.21px;background:#303030;"></div>
<div style="left:811px;top:707.6899999999999px;width:1024px;height:20.21px;background:#333333;"></div>
<div style="left:2px;top:727.9px;width:1833px;height:1px;background:#121212;"></div>
<div style="left:819px;top:707.89px;width:1016px;height:20.01px;background:#783638;"></div>
<div style="left:819px;top:726.5px;width:1016px;height:1.2px;background:rgba(0,0,0,0.18);"></div>
<div style="left:7.5px;top:710.1899999999999px;width:15.5px;height:15.2px;background:#151515;border-radius:3px"></div>
<div style="left:45px;top:710.1899999999999px;width:15.3px;height:15.2px;background:#121212;border-radius:3px"></div>
<div style="left:63.3px;top:710.1899999999999px;width:15.3px;height:15.2px;background:#121212;border-radius:3px"></div>
<div style="left:108px;top:710.29px;width:15px;height:15px;background:#b93b3b;"></div>
<div class="t" style="left:134.00px;top:718.81px;font-size:13.8px;color:#c6c6c6;transform:scaleX(1.0417);transform-origin:0 0;">10</div>
<div class="t" style="left:194.80px;top:718.81px;font-size:13.8px;color:#c8c8c8;transform:scaleX(1.0080);transform-origin:0 0;">made them over</div>
<div style="left:475px;top:710.1899999999999px;width:15.2px;height:15.2px;background:#161616;border-radius:3px"></div>
<div style="left:493.9px;top:710.1899999999999px;width:15.2px;height:15.2px;background:#262626;border-radius:3px"></div>
<div style="left:512.6px;top:710.1899999999999px;width:15.2px;height:15.2px;background:#121212;border-radius:3px"></div>
<div style="left:568.9px;top:710.1899999999999px;width:15.2px;height:15.2px;background:#121212;border-radius:3px"></div>
<div style="left:587.7px;top:710.1899999999999px;width:15.2px;height:15.2px;background:#121212;border-radius:3px"></div>
<div style="left:673.3px;top:709.1899999999999px;width:110.6px;height:17.2px;background:#000;border-radius:4px"></div>
<div class="t" style="left:684.00px;top:718.61px;font-size:13.8px;color:#d8d8d8;transform:scaleX(0.9853);transform-origin:0 0;">None</div>
<div style="left:2px;top:728.9px;width:808px;height:20.21px;background:#303030;"></div>
<div style="left:811px;top:728.9px;width:1024px;height:20.21px;background:#333333;"></div>
<div style="left:2px;top:749.11px;width:1833px;height:1px;background:#121212;"></div>
<div style="left:819px;top:729.1px;width:1016px;height:20.01px;background:#783638;"></div>
<div style="left:819px;top:747.71px;width:1016px;height:1.2px;background:rgba(0,0,0,0.18);"></div>
<div style="left:7.5px;top:731.4px;width:15.5px;height:15.2px;background:#151515;border-radius:3px"></div>
<div style="left:45px;top:731.4px;width:15.3px;height:15.2px;background:#121212;border-radius:3px"></div>
<div style="left:63.3px;top:731.4px;width:15.3px;height:15.2px;background:#121212;border-radius:3px"></div>
<div style="left:108px;top:731.5px;width:15px;height:15px;background:#b93b3b;"></div>
<div class="t" style="left:134.00px;top:740.02px;font-size:13.8px;color:#c6c6c6;transform:scaleX(1.1167);transform-origin:0 0;">11</div>
<div class="t" style="left:194.80px;top:740.02px;font-size:13.8px;color:#c8c8c8;transform:scaleX(1.0676);transform-origin:0 0;">&amp; that</div>
<div style="left:475px;top:731.4px;width:15.2px;height:15.2px;background:#161616;border-radius:3px"></div>
<div style="left:493.9px;top:731.4px;width:15.2px;height:15.2px;background:#262626;border-radius:3px"></div>
<div style="left:512.6px;top:731.4px;width:15.2px;height:15.2px;background:#121212;border-radius:3px"></div>
<div style="left:568.9px;top:731.4px;width:15.2px;height:15.2px;background:#121212;border-radius:3px"></div>
<div style="left:587.7px;top:731.4px;width:15.2px;height:15.2px;background:#121212;border-radius:3px"></div>
<div style="left:673.3px;top:730.4px;width:110.6px;height:17.2px;background:#000;border-radius:4px"></div>
<div class="t" style="left:684.00px;top:739.82px;font-size:13.8px;color:#d8d8d8;transform:scaleX(0.9853);transform-origin:0 0;">None</div>
<div style="left:2px;top:750.1099999999999px;width:808px;height:20.21px;background:#303030;"></div>
<div style="left:811px;top:750.1099999999999px;width:1024px;height:20.21px;background:#333333;"></div>
<div style="left:2px;top:770.3199999999999px;width:1833px;height:1px;background:#121212;"></div>
<div style="left:819px;top:750.31px;width:1016px;height:20.01px;background:#8d6323;"></div>
<div style="left:819px;top:768.92px;width:1016px;height:1.2px;background:rgba(0,0,0,0.18);"></div>
<div style="left:7.5px;top:752.6099999999999px;width:15.5px;height:15.2px;background:#151515;border-radius:3px"></div>
<div style="left:45px;top:752.6099999999999px;width:15.3px;height:15.2px;background:#121212;border-radius:3px"></div>
<div style="left:63.3px;top:752.6099999999999px;width:15.3px;height:15.2px;background:#121212;border-radius:3px"></div>
<div style="left:108px;top:752.7099999999999px;width:15px;height:15px;background:#e8971a;"></div>
<div class="t" style="left:134.00px;top:761.23px;font-size:13.8px;color:#c6c6c6;transform:scaleX(1.0417);transform-origin:0 0;">12</div>
<div class="t" style="left:194.80px;top:761.23px;font-size:13.8px;color:#c8c8c8;transform:scaleX(0.9419);transform-origin:0 0;">MOMENT PRO CAMERA</div>
<div style="left:475px;top:752.6099999999999px;width:15.2px;height:15.2px;background:#161616;border-radius:3px"></div>
<div style="left:493.9px;top:752.6099999999999px;width:15.2px;height:15.2px;background:#262626;border-radius:3px"></div>
<div style="left:512.6px;top:752.6099999999999px;width:15.2px;height:15.2px;background:#121212;border-radius:3px"></div>
<div style="left:568.9px;top:752.6099999999999px;width:15.2px;height:15.2px;background:#121212;border-radius:3px"></div>
<div style="left:587.7px;top:752.6099999999999px;width:15.2px;height:15.2px;background:#121212;border-radius:3px"></div>
<div style="left:606.4px;top:752.6099999999999px;width:15.2px;height:15.2px;background:#121212;border-radius:3px"></div>
<div style="left:673.3px;top:751.6099999999999px;width:110.6px;height:17.2px;background:#000;border-radius:4px"></div>
<div class="t" style="left:684.00px;top:761.03px;font-size:13.8px;color:#d8d8d8;transform:scaleX(0.9853);transform-origin:0 0;">None</div>
<div style="left:2px;top:771.3199999999999px;width:808px;height:20.21px;background:#303030;"></div>
<div style="left:811px;top:771.3199999999999px;width:1024px;height:20.21px;background:#333333;"></div>
<div style="left:2px;top:791.53px;width:1833px;height:1px;background:#121212;"></div>
<div style="left:819px;top:771.52px;width:1016px;height:20.01px;background:#8d6323;"></div>
<div style="left:819px;top:790.13px;width:1016px;height:1.2px;background:rgba(0,0,0,0.18);"></div>
<div style="left:7.5px;top:773.8199999999999px;width:15.5px;height:15.2px;background:#151515;border-radius:3px"></div>
<div style="left:45px;top:773.8199999999999px;width:15.3px;height:15.2px;background:#121212;border-radius:3px"></div>
<div style="left:63.3px;top:773.8199999999999px;width:15.3px;height:15.2px;background:#121212;border-radius:3px"></div>
<div style="left:108px;top:773.92px;width:15px;height:15px;background:#e8971a;"></div>
<div class="t" style="left:134.00px;top:782.44px;font-size:13.8px;color:#c6c6c6;transform:scaleX(1.0417);transform-origin:0 0;">13</div>
<div class="t" style="left:194.80px;top:782.44px;font-size:13.8px;color:#c8c8c8;transform:scaleX(0.9986);transform-origin:0 0;">096</div>
<div style="left:475px;top:773.8199999999999px;width:15.2px;height:15.2px;background:#161616;border-radius:3px"></div>
<div style="left:493.9px;top:773.8199999999999px;width:15.2px;height:15.2px;background:#262626;border-radius:3px"></div>
<div style="left:512.6px;top:773.8199999999999px;width:15.2px;height:15.2px;background:#121212;border-radius:3px"></div>
<div style="left:568.9px;top:773.8199999999999px;width:15.2px;height:15.2px;background:#121212;border-radius:3px"></div>
<div style="left:587.7px;top:773.8199999999999px;width:15.2px;height:15.2px;background:#121212;border-radius:3px"></div>
<div style="left:606.4px;top:773.8199999999999px;width:15.2px;height:15.2px;background:#121212;border-radius:3px"></div>
<div style="left:673.3px;top:772.8199999999999px;width:110.6px;height:17.2px;background:#000;border-radius:4px"></div>
<div class="t" style="left:684.00px;top:782.24px;font-size:13.8px;color:#d8d8d8;transform:scaleX(0.9853);transform-origin:0 0;">None</div>
<div style="left:2px;top:792.53px;width:808px;height:20.21px;background:#303030;"></div>
<div style="left:811px;top:792.53px;width:1024px;height:20.21px;background:#333333;"></div>
<div style="left:2px;top:812.74px;width:1833px;height:1px;background:#121212;"></div>
<div style="left:819px;top:792.73px;width:1016px;height:20.01px;background:#8d6323;"></div>
<div style="left:819px;top:811.34px;width:1016px;height:1.2px;background:rgba(0,0,0,0.18);"></div>
<div style="left:7.5px;top:795.03px;width:15.5px;height:15.2px;background:#151515;border-radius:3px"></div>
<div style="left:45px;top:795.03px;width:15.3px;height:15.2px;background:#121212;border-radius:3px"></div>
<div style="left:63.3px;top:795.03px;width:15.3px;height:15.2px;background:#121212;border-radius:3px"></div>
<div style="left:108px;top:795.13px;width:15px;height:15px;background:#e8971a;"></div>
<div class="t" style="left:134.00px;top:803.65px;font-size:13.8px;color:#c6c6c6;transform:scaleX(1.0417);transform-origin:0 0;">14</div>
<div class="t" style="left:194.80px;top:803.65px;font-size:13.8px;color:#c8c8c8;transform:scaleX(0.9729);transform-origin:0 0;">Concept</div>
<div style="left:475px;top:795.03px;width:15.2px;height:15.2px;background:#161616;border-radius:3px"></div>
<div style="left:493.9px;top:795.03px;width:15.2px;height:15.2px;background:#262626;border-radius:3px"></div>
<div style="left:512.6px;top:795.03px;width:15.2px;height:15.2px;background:#121212;border-radius:3px"></div>
<div style="left:568.9px;top:795.03px;width:15.2px;height:15.2px;background:#121212;border-radius:3px"></div>
<div style="left:587.7px;top:795.03px;width:15.2px;height:15.2px;background:#121212;border-radius:3px"></div>
<div style="left:606.4px;top:795.03px;width:15.2px;height:15.2px;background:#121212;border-radius:3px"></div>
<div style="left:673.3px;top:794.03px;width:110.6px;height:17.2px;background:#000;border-radius:4px"></div>
<div class="t" style="left:684.00px;top:803.45px;font-size:13.8px;color:#d8d8d8;transform:scaleX(0.9853);transform-origin:0 0;">None</div>
<div style="left:2px;top:813.74px;width:808px;height:20.21px;background:#303030;"></div>
<div style="left:811px;top:813.74px;width:1024px;height:20.21px;background:#333333;"></div>
<div style="left:2px;top:833.95px;width:1833px;height:1px;background:#121212;"></div>
<div style="left:819px;top:813.94px;width:1016px;height:20.01px;background:#8d6323;"></div>
<div style="left:819px;top:832.5500000000001px;width:1016px;height:1.2px;background:rgba(0,0,0,0.18);"></div>
<div style="left:7.5px;top:816.24px;width:15.5px;height:15.2px;background:#151515;border-radius:3px"></div>
<div style="left:45px;top:816.24px;width:15.3px;height:15.2px;background:#121212;border-radius:3px"></div>
<div style="left:63.3px;top:816.24px;width:15.3px;height:15.2px;background:#121212;border-radius:3px"></div>
<div style="left:108px;top:816.34px;width:15px;height:15px;background:#e8971a;"></div>
<div class="t" style="left:134.00px;top:824.86px;font-size:13.8px;color:#c6c6c6;transform:scaleX(1.0417);transform-origin:0 0;">15</div>
<div class="t" style="left:194.80px;top:824.86px;font-size:13.8px;color:#c8c8c8;transform:scaleX(0.9526);transform-origin:0 0;">Shape Layer 2</div>
<div style="left:475px;top:816.24px;width:15.2px;height:15.2px;background:#161616;border-radius:3px"></div>
<div style="left:493.9px;top:816.24px;width:15.2px;height:15.2px;background:#262626;border-radius:3px"></div>
<div style="left:512.6px;top:816.24px;width:15.2px;height:15.2px;background:#121212;border-radius:3px"></div>
<div style="left:568.9px;top:816.24px;width:15.2px;height:15.2px;background:#121212;border-radius:3px"></div>
<div style="left:587.7px;top:816.24px;width:15.2px;height:15.2px;background:#121212;border-radius:3px"></div>
<div style="left:606.4px;top:816.24px;width:15.2px;height:15.2px;background:#121212;border-radius:3px"></div>
<div style="left:673.3px;top:815.24px;width:110.6px;height:17.2px;background:#000;border-radius:4px"></div>
<div class="t" style="left:684.00px;top:824.66px;font-size:13.8px;color:#d8d8d8;transform:scaleX(0.9853);transform-origin:0 0;">None</div>
<div style="left:2px;top:834.95px;width:808px;height:20.21px;background:#303030;"></div>
<div style="left:811px;top:834.95px;width:1024px;height:20.21px;background:#333333;"></div>
<div style="left:2px;top:855.1600000000001px;width:1833px;height:1px;background:#121212;"></div>
<div style="left:819px;top:835.1500000000001px;width:1016px;height:20.01px;background:#6f6754;"></div>
<div style="left:819px;top:853.7600000000001px;width:1016px;height:1.2px;background:rgba(0,0,0,0.18);"></div>
<div style="left:7.5px;top:837.45px;width:15.5px;height:15.2px;background:#151515;border-radius:3px"></div>
<div style="left:45px;top:837.45px;width:15.3px;height:15.2px;background:#121212;border-radius:3px"></div>
<div style="left:63.3px;top:837.45px;width:15.3px;height:15.2px;background:#121212;border-radius:3px"></div>
<div style="left:108px;top:837.5500000000001px;width:15px;height:15px;background:#b39f7f;"></div>
<div class="t" style="left:134.00px;top:846.07px;font-size:13.8px;color:#c6c6c6;transform:scaleX(1.0417);transform-origin:0 0;">16</div>
<div class="t" style="left:194.80px;top:846.07px;font-size:13.8px;color:#c8c8c8;transform:scaleX(0.9965);transform-origin:0 0;">[crocs]</div>
<div style="left:475px;top:837.45px;width:15.2px;height:15.2px;background:#161616;border-radius:3px"></div>
<div style="left:493.9px;top:837.45px;width:15.2px;height:15.2px;background:#121212;border-radius:3px"></div>
<div style="left:512.6px;top:837.45px;width:15.2px;height:15.2px;background:#121212;border-radius:3px"></div>
<div style="left:568.9px;top:837.45px;width:15.2px;height:15.2px;background:#121212;border-radius:3px"></div>
<div style="left:587.7px;top:837.45px;width:15.2px;height:15.2px;background:#121212;border-radius:3px"></div>
<div style="left:673.3px;top:836.45px;width:110.6px;height:17.2px;background:#000;border-radius:4px"></div>
<div class="t" style="left:684.00px;top:845.87px;font-size:13.8px;color:#d8d8d8;transform:scaleX(0.9853);transform-origin:0 0;">None</div>
<div style="left:2px;top:856.16px;width:808px;height:20.21px;background:#303030;"></div>
<div style="left:811px;top:856.16px;width:1024px;height:20.21px;background:#333333;"></div>
<div style="left:2px;top:876.37px;width:1833px;height:1px;background:#121212;"></div>
<div style="left:819px;top:856.36px;width:1016px;height:20.01px;background:#6f6754;"></div>
<div style="left:819px;top:874.97px;width:1016px;height:1.2px;background:rgba(0,0,0,0.18);"></div>
<div style="left:7.5px;top:858.66px;width:15.5px;height:15.2px;background:#151515;border-radius:3px"></div>
<div style="left:45px;top:858.66px;width:15.3px;height:15.2px;background:#121212;border-radius:3px"></div>
<div style="left:63.3px;top:858.66px;width:15.3px;height:15.2px;background:#121212;border-radius:3px"></div>
<div style="left:108px;top:858.76px;width:15px;height:15px;background:#b39f7f;"></div>
<div class="t" style="left:134.00px;top:867.28px;font-size:13.8px;color:#c6c6c6;transform:scaleX(1.0417);transform-origin:0 0;">17</div>
<div class="t" style="left:194.80px;top:867.28px;font-size:13.8px;color:#c8c8c8;transform:scaleX(0.9650);transform-origin:0 0;">crocs shadow 2</div>
<div style="left:475px;top:858.66px;width:15.2px;height:15.2px;background:#161616;border-radius:3px"></div>
<div style="left:493.9px;top:858.66px;width:15.2px;height:15.2px;background:#121212;border-radius:3px"></div>
<div style="left:512.6px;top:858.66px;width:15.2px;height:15.2px;background:#121212;border-radius:3px"></div>
<div style="left:531.4px;top:858.66px;width:15.2px;height:15.2px;background:#121212;border-radius:3px"></div>
<div class="t" style="left:532.00px;top:867.09px;font-size:15.5px;color:#bdbdbd;transform:scaleX(1.2021);transform-origin:0 0;font-style:italic;">fx</div>
<div style="left:568.9px;top:858.66px;width:15.2px;height:15.2px;background:#121212;border-radius:3px"></div>
<div style="left:587.7px;top:858.66px;width:15.2px;height:15.2px;background:#121212;border-radius:3px"></div>
<div style="left:673.3px;top:857.66px;width:110.6px;height:17.2px;background:#000;border-radius:4px"></div>
<div class="t" style="left:684.00px;top:867.08px;font-size:13.8px;color:#d8d8d8;transform:scaleX(0.9853);transform-origin:0 0;">None</div>
<div style="left:2px;top:877.3699999999999px;width:808px;height:20.21px;background:#303030;"></div>
<div style="left:811px;top:877.3699999999999px;width:1024px;height:20.21px;background:#333333;"></div>
<div style="left:2px;top:897.5799999999999px;width:1833px;height:1px;background:#121212;"></div>
<div style="left:819px;top:877.5699999999999px;width:1016px;height:20.01px;background:#6f6754;"></div>
<div style="left:819px;top:896.18px;width:1016px;height:1.2px;background:rgba(0,0,0,0.18);"></div>
<div style="left:7.5px;top:879.8699999999999px;width:15.5px;height:15.2px;background:#151515;border-radius:3px"></div>
<div style="left:45px;top:879.8699999999999px;width:15.3px;height:15.2px;background:#121212;border-radius:3px"></div>
<div style="left:63.3px;top:879.8699999999999px;width:15.3px;height:15.2px;background:#121212;border-radius:3px"></div>
<div style="left:108px;top:879.9699999999999px;width:15px;height:15px;background:#b39f7f;"></div>
<div class="t" style="left:134.00px;top:888.49px;font-size:13.8px;color:#c6c6c6;transform:scaleX(1.0417);transform-origin:0 0;">18</div>
<div class="t" style="left:194.80px;top:888.49px;font-size:13.8px;color:#c8c8c8;transform:scaleX(0.9602);transform-origin:0 0;">crocs shadow</div>
<div style="left:475px;top:879.8699999999999px;width:15.2px;height:15.2px;background:#161616;border-radius:3px"></div>
<div style="left:493.9px;top:879.8699999999999px;width:15.2px;height:15.2px;background:#121212;border-radius:3px"></div>
<div style="left:512.6px;top:879.8699999999999px;width:15.2px;height:15.2px;background:#121212;border-radius:3px"></div>
<div style="left:531.4px;top:879.8699999999999px;width:15.2px;height:15.2px;background:#121212;border-radius:3px"></div>
<div class="t" style="left:532.00px;top:888.30px;font-size:15.5px;color:#bdbdbd;transform:scaleX(1.2021);transform-origin:0 0;font-style:italic;">fx</div>
<div style="left:568.9px;top:879.8699999999999px;width:15.2px;height:15.2px;background:#121212;border-radius:3px"></div>
<div style="left:587.7px;top:879.8699999999999px;width:15.2px;height:15.2px;background:#121212;border-radius:3px"></div>
<div style="left:673.3px;top:878.8699999999999px;width:110.6px;height:17.2px;background:#000;border-radius:4px"></div>
<div class="t" style="left:684.00px;top:888.29px;font-size:13.8px;color:#d8d8d8;transform:scaleX(0.9853);transform-origin:0 0;">None</div>
<div style="left:2px;top:898.5799999999999px;width:808px;height:20.21px;background:#303030;"></div>
<div style="left:811px;top:898.5799999999999px;width:1024px;height:20.21px;background:#333333;"></div>
<div style="left:2px;top:918.79px;width:1833px;height:1px;background:#121212;"></div>
<div style="left:819px;top:898.78px;width:1016px;height:20.01px;background:#783638;"></div>
<div style="left:819px;top:917.39px;width:1016px;height:1.2px;background:rgba(0,0,0,0.18);"></div>
<div style="left:7.5px;top:901.0799999999999px;width:15.5px;height:15.2px;background:#151515;border-radius:3px"></div>
<div style="left:45px;top:901.0799999999999px;width:15.3px;height:15.2px;background:#121212;border-radius:3px"></div>
<div style="left:63.3px;top:901.0799999999999px;width:15.3px;height:15.2px;background:#121212;border-radius:3px"></div>
<div style="left:108px;top:901.18px;width:15px;height:15px;background:#b93b3b;"></div>
<div class="t" style="left:134.00px;top:909.70px;font-size:13.8px;color:#c6c6c6;transform:scaleX(1.0417);transform-origin:0 0;">19</div>
<div style="left:171px;top:900.28px;width:17.2px;height:17px;background:#0c0c0c;border:1px solid #262626"></div>
<div class="t" style="left:194.80px;top:909.70px;font-size:13.8px;color:#c8c8c8;transform:scaleX(0.9824);transform-origin:0 0;">[Dark Gray Solid 2]</div>
<div style="left:475px;top:901.0799999999999px;width:15.2px;height:15.2px;background:#161616;border-radius:3px"></div>
<div style="left:493.9px;top:901.0799999999999px;width:15.2px;height:15.2px;background:#121212;border-radius:3px"></div>
<div style="left:512.6px;top:901.0799999999999px;width:15.2px;height:15.2px;background:#121212;border-radius:3px"></div>
<div style="left:531.4px;top:901.0799999999999px;width:15.2px;height:15.2px;background:#121212;border-radius:3px"></div>
<div class="t" style="left:532.00px;top:909.51px;font-size:15.5px;color:#bdbdbd;transform:scaleX(1.2021);transform-origin:0 0;font-style:italic;">fx</div>
<div style="left:568.9px;top:901.0799999999999px;width:15.2px;height:15.2px;background:#121212;border-radius:3px"></div>
<div style="left:587.7px;top:901.0799999999999px;width:15.2px;height:15.2px;background:#121212;border-radius:3px"></div>
<div style="left:606.4px;top:901.0799999999999px;width:15.2px;height:15.2px;background:#121212;border-radius:3px"></div>
<div style="left:673.3px;top:900.0799999999999px;width:110.6px;height:17.2px;background:#000;border-radius:4px"></div>
<div class="t" style="left:684.00px;top:909.50px;font-size:13.8px;color:#d8d8d8;transform:scaleX(0.9853);transform-origin:0 0;">None</div>
<div style="left:809px;top:490px;width:2px;height:451px;background:#0c0c0c;"></div>
<div style="left:1835px;top:516.4px;width:20px;height:424px;background:#1d1d1d;"></div>
<div style="left:2px;top:919.79px;width:807px;height:20.710000000000036px;background:#1f1f1f;"></div>
<div style="left:811px;top:919.79px;width:1024px;height:20.710000000000036px;background:#252525;"></div>
<div style="left:811px;top:919.79px;width:8px;height:20.710000000000036px;background:#222222;"></div>
<div style="left:2px;top:939.4px;width:1853px;height:1.2px;background:#1a1a1a;"></div>
<div style="left:2px;top:940.6px;width:1853px;height:20.4px;background:#1f1f1f;"></div>
<div style="left:944.6px;top:941.6px;width:889.4px;height:19.4px;background:#4b4b4b;"></div>
<div class="t" style="left:131.00px;top:953.72px;font-size:13.8px;color:#c6c6c6;transform:scaleX(0.9722);transform-origin:0 0;">Frame Render Time:</div>
<div class="t" style="left:259.50px;top:953.72px;font-size:13.8px;color:#7bc97b;font-weight:700;transform:scaleX(0.9774);transform-origin:0 0;">41ms</div>
<div class="t" style="left:482.00px;top:952.82px;font-size:13.8px;color:#c6c6c6;transform:scaleX(0.9829);transform-origin:0 0;">Toggle Switches / Modes</div>
<svg style="left:0;top:0" width="1919" height="961" viewBox="0 0 1919 961"><rect x="5" y="12" width="3" height="1" fill="#6e6e6e"/><rect x="5" y="14" width="3" height="1" fill="#6e6e6e"/><rect x="5" y="16" width="3" height="1" fill="#6e6e6e"/><rect x="5" y="18" width="3" height="1" fill="#6e6e6e"/><rect x="5" y="20" width="3" height="1" fill="#6e6e6e"/><rect x="5" y="22" width="3" height="1" fill="#6e6e6e"/><rect x="5" y="24" width="3" height="1" fill="#6e6e6e"/><rect x="5" y="26" width="3" height="1" fill="#6e6e6e"/><rect x="5" y="28" width="3" height="1" fill="#6e6e6e"/><rect x="5" y="30" width="3" height="1" fill="#6e6e6e"/><polygon points="17.5,24 28,13 38.5,24 36,24 36,31.8 31,31.8 31,25 25,25 25,31.8 20,31.8 20,24" fill="#a9a9a9"/><rect x="47.2" y="8.5" width="1.6" height="27.0" fill="#0e0e0e"/><rect x="53" y="7" width="30" height="30" rx="4.5" fill="#0c6de2"/><polygon points="62,12.3 62,33 68,27 77,26.8" fill="#fff"/><g stroke="#a9a9a9" stroke-width="2.5" stroke-linecap="round" fill="none"><path d="M95.3,23 L94.3,15.2"/><path d="M99.3,22 L99.3,12.8"/><path d="M103.3,22 L103.6,14.2"/><path d="M106.8,24 L108.2,18"/><path d="M95,28.5 L90.2,23"/></g><ellipse cx="101" cy="27.3" rx="6.6" ry="5.4" fill="#a9a9a9"/><circle cx="128.3" cy="19.6" r="7.2" stroke="#a9a9a9" stroke-width="1.6" fill="none"/><path d="M133.6,25 L140.2,31.5" stroke="#a9a9a9" stroke-width="2.3" stroke-linecap="round"/><rect x="149.7" y="8.5" width="1.6" height="27.0" fill="#0e0e0e"/><circle cx="171.5" cy="17.3" r="4.5" fill="#a9a9a9"/><path d="M167.5,16.5 C160.5,15.5 159.5,23.5 165.5,24.5" stroke="#a9a9a9" stroke-width="1.7" fill="none"/><polygon points="163,26 169,26.5 165.5,29.5 163,29.5" fill="#a9a9a9"/><path d="M175,21 C181,22 181,28.5 174.5,28.5 L172.5,28.5" stroke="#a9a9a9" stroke-width="1.7" fill="none"/><polygon points="178.5,35 183,35 183,30.5" fill="#a9a9a9"/><g fill="#a9a9a9"><rect x="193.5" y="21" width="17" height="2"/><rect x="201" y="13.5" width="2" height="17"/><polygon points="202,12.5 205,16 199,16"/><polygon points="202,31.5 205,28 199,28"/><polygon points="192.5,22 196,19 196,25"/><polygon points="211.5,22 208,19 208,25"/><polygon points="202,18.5 205.5,22 202,25.5 198.5,22"/></g><polygon points="210.0,35 214.5,35 214.5,30.5" fill="#a9a9a9"/><g fill="#a9a9a9"><rect x="232" y="14.5" width="2" height="12"/><rect x="229.5" y="14" width="7" height="1.8"/><polygon points="227,25 239,25 233,31.5"/></g><polygon points="242.0,35 246.5,35 246.5,30.5" fill="#a9a9a9"/><rect x="252.2" y="8.5" width="1.6" height="27.0" fill="#0e0e0e"/><path d="M266.5,16.5 A10,9.5 0 0 1 283,22.5" stroke="#a9a9a9" stroke-width="1.8" fill="none"/><polygon points="263,13 264,20.5 270.5,18.5" fill="#a9a9a9"/><circle cx="281.9240407720501" cy="25.25752917082679" r="0.8" fill="#a9a9a9"/><circle cx="279.9510442543013" cy="28.475568220221675" r="0.8" fill="#a9a9a9"/><circle cx="276.8806306883995" cy="30.67125743247495" r="0.8" fill="#a9a9a9"/><circle cx="273.19755086412937" cy="31.497945759798892" r="0.8" fill="#a9a9a9"/><circle cx="269.4832821021628" cy="30.82511729253676" r="0.8" fill="#a9a9a9"/><circle cx="266.32422577065125" cy="28.75899685151302" r="0.8" fill="#a9a9a9"/><circle cx="264.2191274029916" cy="25.62577942449715" r="0.8" fill="#a9a9a9"/><g stroke="#a9a9a9" stroke-width="1.5" fill="none" stroke-dasharray="3 2"><rect x="294.5" y="13.5" width="20" height="17.5"/></g><g fill="#a9a9a9"><polygon points="301,17.5 308,17.5 304.5,14.5"/><polygon points="301,27 308,27 304.5,30"/><polygon points="300.5,19 300.5,25.5 297.5,22.2"/><polygon points="308.5,19 308.5,25.5 311.5,22.2"/></g><rect x="324.0" y="8.5" width="1.6" height="27.0" fill="#0e0e0e"/><rect x="334.7" y="13.8" width="19.6" height="17" rx="1.8" fill="#3b3b3b" stroke="#9c9c9c" stroke-width="1.4"/><polygon points="353.0,35 357.5,35 357.5,30.5" fill="#a9a9a9"/><g fill="#a9a9a9"><polygon points="377,15.5 381,12 386,17 382.5,21"/><path d="M376,17 L383,23.5 L380.5,29.5 L366.5,33 L370,19.5 Z"/></g><path d="M367.5,32 L373.5,26" stroke="#1d1d1d" stroke-width="1.2"/><circle cx="374.5" cy="25" r="1.3" fill="#1d1d1d"/><polygon points="384.0,35 388.5,35 388.5,30.5" fill="#a9a9a9"/><g fill="#a9a9a9"><rect x="398" y="13.5" width="18" height="2.6"/><rect x="398" y="13.5" width="2.2" height="5"/><rect x="413.8" y="13.5" width="2.2" height="5"/><rect x="405.5" y="13.5" width="3" height="17.5"/><rect x="402.5" y="29.2" width="9" height="2"/></g><polygon points="415.0,35 419.5,35 419.5,30.5" fill="#a9a9a9"/><rect x="426.2" y="8.5" width="1.6" height="27.0" fill="#0e0e0e"/><path d="M457,12.5 L445.5,25.5" stroke="#a9a9a9" stroke-width="3.2" stroke-linecap="round"/><path d="M444.5,24.5 C440,25 441,30 436,32.5 C443,33.5 448,31 447.5,27 Z" fill="#a9a9a9"/><g fill="#a9a9a9"><circle cx="478.5" cy="15.3" r="3.2"/><rect x="477" y="16" width="3" height="7"/><path d="M468.5,28 L468.5,25 Q468.5,23 471,23 L486,23 Q488.5,23 488.5,25 L488.5,28 Z"/><rect x="469" y="29.5" width="19" height="1.5"/></g><polygon points="513,11.1 520.6,18.7 511.6,27.5 504,19.9" fill="#a9a9a9"/><polygon points="504,19.9 511.6,27.5 507,32 499.4,24.4" fill="none" stroke="#a9a9a9" stroke-width="1.5" stroke-linejoin="round"/><rect x="528.7" y="8.5" width="1.6" height="27.0" fill="#0e0e0e"/><g fill="#a9a9a9"><circle cx="543.5" cy="14.2" r="1.8"/></g><path d="M543,17 L541.5,24 L539,30.5 M541.5,24 L544.5,27 L545,31 M542.5,19 L538,20.5 L537,23 M542.5,19 L546.5,21.5" stroke="#a9a9a9" stroke-width="1.6" fill="none" stroke-linecap="round"/><path d="M563.5,13 L553.5,25" stroke="#a9a9a9" stroke-width="2.6" stroke-linecap="round"/><path d="M552.5,24 C548.5,25 549.5,29 545.5,30.5 C551.5,31.5 555.5,29.5 555,26.5 Z" fill="#a9a9a9"/><polygon points="558.0,35 562.5,35 562.5,30.5" fill="#a9a9a9"/><rect x="568.7" y="8.5" width="1.6" height="27.0" fill="#0e0e0e"/><g fill="#a9a9a9"><polygon points="588,12 597,21 594.5,22 588.5,27.5 588,30 578.5,20.5 581,20 586.5,14.5"/></g><path d="M583.5,25 L578,30.5" stroke="#a9a9a9" stroke-width="1.8" stroke-linecap="round"/><polygon points="598.0,35 602.5,35 602.5,30.5" fill="#a9a9a9"/><rect x="661" y="7" width="29.5" height="30" rx="4.5" fill="#4b4b4b"/><g stroke="#d2d2d2" stroke-width="1.6" fill="none"><path d="M675.5,24.0 L675.5,15.5"/><path d="M675.5,24.0 L668.0,29.0"/><path d="M675.5,24.0 L683.0,29.0"/></g><g fill="#d2d2d2"><polygon points="675.5,13.5 672.9,17.0 678.1,17.0"/><polygon points="666.5,30.3 671.0,30.3 668.5,26.0"/><polygon points="684.5,30.3 680.0,30.3 682.5,26.0"/></g><g stroke="#a9a9a9" stroke-width="1.6" fill="none"><path d="M707.5,24.0 L707.5,15.5"/><path d="M707.5,24.0 L700.0,29.0"/><path d="M707.5,24.0 L715.0,29.0"/></g><g fill="#a9a9a9"><polygon points="707.5,13.5 704.9,17.0 710.1,17.0"/><polygon points="698.5,30.3 703.0,30.3 700.5,26.0"/><polygon points="716.5,30.3 712.0,30.3 714.5,26.0"/></g><circle cx="707.5" cy="24.0" r="2.5" fill="#1d1d1d" stroke="#a9a9a9" stroke-width="1.4"/><g stroke="#a9a9a9" stroke-width="1.5" fill="none"><polygon points="735,22 747,17 747,25 735,29.5"/><path d="M733,14 L746,27"/></g><polygon points="732,13 737,13.5 732.5,18" fill="#a9a9a9"/><rect x="763.7" y="8.5" width="1.6" height="27.0" fill="#0e0e0e"/><rect x="773" y="7" width="30" height="30" rx="4.5" fill="#4b4b4b"/><polygon points="782,12.8 782,33 788,27 797,26.8" fill="#d4d4d4"/><g fill="#a9a9a9"><rect x="812" y="21.3" width="17" height="1.6"/><rect x="819.7" y="13.5" width="1.6" height="17"/><polygon points="820.5,12.5 823,15.5 818,15.5"/><polygon points="820.5,31.5 823,28.5 818,28.5"/><polygon points="810.5,22.1 813.5,19.6 813.5,24.6"/><polygon points="830.5,22.1 827.5,19.6 827.5,24.6"/></g><rect x="844.8" y="13.8" width="16.6" height="16.6" fill="none" stroke="#a9a9a9" stroke-width="1.7"/><path d="M846,21 L852,21 M852,21 L852,30" stroke="#a9a9a9" stroke-width="0.9" stroke-dasharray="1 1"/><path d="M879,15.5 A8.2,8.2 0 1 1 877.2,23" stroke="#a9a9a9" stroke-width="1.8" fill="none"/><polygon points="875.5,13.5 876,20.5 882,18" fill="#a9a9a9"/><rect x="967.7" y="8.5" width="1.6" height="27.0" fill="#0e0e0e"/><rect x="978" y="15.5" width="13.5" height="13.5" rx="2" fill="#0d0d0d" stroke="#bdbdbd" stroke-width="2"/><path d="M1087,29.5 L1093,23.5 L1099,29.5" stroke="#a9a9a9" stroke-width="1.4" fill="none"/><path d="M1093,23.5 L1099,17.5" stroke="#a9a9a9" stroke-width="1.3" stroke-dasharray="1.4 1"/><polygon points="1101.5,15 1096,16 1100.5,20.5" fill="#a9a9a9"/><rect x="1112" y="7" width="30" height="30" rx="4.5" fill="#4b4b4b"/><g stroke="#c8c8c8" stroke-width="1.5" fill="none"><path d="M1120,18 L1120,15 L1123,15"/><path d="M1131,15 L1134,15 L1134,18"/><path d="M1120,26 L1120,29 L1123,29"/><path d="M1131,29 L1134,29 L1134,26"/></g><g fill="#c8c8c8"><circle cx="1124.5" cy="19.5" r="1"/><circle cx="1129.5" cy="19.5" r="1"/><circle cx="1124.5" cy="24.5" r="1"/><circle cx="1129.5" cy="24.5" r="1"/></g><rect x="1241" y="35.8" width="73" height="2.2" rx="1.1" fill="#dcdcdc"/><g fill="#8c8c8c"><rect x="1304" y="18.5" width="10" height="1.3"/><rect x="1304" y="22.3" width="10" height="1.3"/><rect x="1304" y="26.1" width="10" height="1.3"/></g><g stroke="#c8c8c8" stroke-width="1.8" fill="none"><path d="M1882,17.8 L1886.5,22.2 L1882,26.6"/><path d="M1888.5,17.8 L1893,22.2 L1888.5,26.6"/></g><rect x="15" y="76.8" width="66" height="2.2" rx="1.1" fill="#dadada"/><g fill="#8e8e8e"><rect x="71.5" y="61.2" width="9.5" height="1.3"/><rect x="71.5" y="65.10000000000001" width="9.5" height="1.3"/><rect x="71.5" y="69.0" width="9.5" height="1.3"/></g><polygon points="231.5,92.5 242,92.5 236.8,97.5" fill="#b0b0b0"/><circle cx="22.3" cy="228.6" r="4.2" stroke="#bcbcbc" stroke-width="1.3" fill="none"/><path d="M25.4,231.8 L30.6,237.4" stroke="#bcbcbc" stroke-width="1.4"/><path d="M29.6,230.6 L33,234 L36.6,230.6" stroke="#bcbcbc" stroke-width="1.2" fill="none"/><path d="M8.5,261.5 L8.5,258 Q8.5,257.5 9,257.5 L16,257.5 L23.5,265.5 L16.5,272.5 Z" fill="#b2b2b2"/><circle cx="11.5" cy="260.5" r="1.1" fill="#1d1d1d"/><rect x="26.2" y="258" width="3" height="13" fill="#101010"/><rect x="46" y="258" width="3" height="13" fill="#101010"/><rect x="316" y="258" width="3" height="13" fill="#101010"/><rect x="683.5" y="258" width="3" height="13" fill="#101010"/><rect x="780.5" y="258" width="3" height="13" fill="#101010"/><rect x="840.5" y="258" width="3" height="13" fill="#101010"/><rect x="903.5" y="258" width="3" height="13" fill="#101010"/><rect x="999.5" y="258" width="3" height="13" fill="#101010"/><path d="M32,283.5 L36.32,288.3 L32,293.1" stroke="#b8b8b8" stroke-width="2.0" fill="none"/><path d="M49,281.5 L49,294 L67,294 L67,283 L57,283 L56,281 Q55.8,280 55,280 L50,280 Q49,280 49,281.5 Z" fill="#b0b0b0"/><rect x="49" y="281.2" width="6" height="1" fill="#1d1d1d" opacity="0.0"/><polygon points="58,302.2 65.8,306.8 65.8,315.5 58,320 50.2,315.5 50.2,306.8" fill="#b0b0b0"/><path d="M55.5,309 L62.5,305.5 M55.5,309 L55.5,318.2 M62.8,308.5 L62.8,314.8 L57,318" stroke="#1d1d1d" stroke-width="1.3" fill="none"/><path d="M52,326 L62,326 L66,330 L66,344 L52,344 Z" fill="#f4f4f4"/><path d="M62,326 L62,330 L66,330" fill="#cfcfcf"/><rect x="54.5" y="332" width="9" height="8" fill="#2b87f0"/><polygon points="54.5,340 58,335.5 61,338.5 63.5,336 63.5,340" fill="#6cc3ff"/><circle cx="61.5" cy="334.5" r="1.2" fill="#fff"/><rect x="68.2" y="323.6" width="1.3" height="22.8" fill="#555"/><path d="M52,350 L62,350 L66,354 L66,368 L52,368 Z" fill="#f4f4f4"/><path d="M62,350 L62,354 L66,354" fill="#cfcfcf"/><rect x="54.5" y="356" width="9" height="8" fill="#2b87f0"/><polygon points="54.5,364 58,359.5 61,362.5 63.5,360 63.5,364" fill="#6cc3ff"/><circle cx="61.5" cy="358.5" r="1.2" fill="#fff"/><g fill="#b0b0b0"><rect x="993.5" y="280" width="5" height="4"/><rect x="995.5" y="284" width="1" height="3"/><rect x="989" y="287" width="15" height="1.2"/><rect x="989" y="287" width="1.2" height="4"/><rect x="1002.8" y="287" width="1.2" height="4"/><rect x="987.5" y="291" width="5" height="4.5"/><rect x="1000.5" y="291" width="5" height="4.5"/></g><g fill="#a8a8a8"><rect x="10" y="391" width="15" height="8.5" rx="1"/><rect x="3" y="396" width="2.5" height="9.5"/><rect x="5" y="400" width="15" height="5.5"/></g><rect x="12.5" y="393.5" width="10" height="3.5" fill="#1d1d1d"/><rect x="14" y="394.5" width="7" height="1.5" fill="#a8a8a8"/><path d="M36,391.3 Q36,389.8 37.5,389.8 L42,389.8 L43.5,391.5 L52,391.5 L52,403 L36,403 Z" fill="#a8a8a8"/><rect x="64.5" y="390" width="18.5" height="13.5" fill="none" stroke="#a8a8a8" stroke-width="1.3"/><g fill="#a8a8a8"><rect x="65.3" y="391.0" width="1.4" height="1.3"/><rect x="80.8" y="391.0" width="1.4" height="1.3"/><rect x="65.3" y="393.6" width="1.4" height="1.3"/><rect x="80.8" y="393.6" width="1.4" height="1.3"/><rect x="65.3" y="396.2" width="1.4" height="1.3"/><rect x="80.8" y="396.2" width="1.4" height="1.3"/><rect x="65.3" y="398.8" width="1.4" height="1.3"/><rect x="80.8" y="398.8" width="1.4" height="1.3"/><rect x="65.3" y="401.4" width="1.4" height="1.3"/><rect x="80.8" y="401.4" width="1.4" height="1.3"/></g><circle cx="71.3" cy="394.3" r="2.4" fill="#3d86f0"/><rect x="73" y="394.5" width="5" height="5" fill="#e8352e"/><polygon points="69,401.5 74,401.5 71.5,397" fill="#2fb35a"/><path d="M110,389.5 C104,390.5 99.5,394.5 97.5,400 L101,399.5 L100,404.5 C104.5,402.5 108.5,396.5 110,389.5 Z" fill="#a8a8a8"/><path d="M95,397 L99,394" stroke="#a8a8a8" stroke-width="1.3"/><rect x="197" y="392" width="11" height="12" rx="1.5" fill="none" stroke="#a0a0a0" stroke-width="1.3"/><rect x="195.5" y="390.5" width="14" height="1.5" fill="#a0a0a0"/><rect x="200" y="388.6" width="5" height="2" fill="none" stroke="#a0a0a0" stroke-width="1"/><rect x="200.3" y="393.5" width="1" height="9" fill="#a0a0a0"/><rect x="203.5" y="393.5" width="1" height="9" fill="#a0a0a0"/><path d="M1028,62.8 L1034.8,69.6 M1034.8,62.8 L1028,69.6" stroke="#9c9c9c" stroke-width="1.3"/><path d="M1075.5,63.5 L1075.5,60.5 A3.2,3.2 0 0 1 1081.9,60.5 L1081.9,61.5" stroke="#a8a8a8" stroke-width="1.6" fill="none"/><rect x="1073.2" y="63.2" width="11" height="7.2" rx="1" fill="#a8a8a8"/><rect x="1078" y="65.5" width="1.5" height="3" fill="#1d1d1d"/><g fill="#909090"><rect x="1236.5" y="61.4" width="10.5" height="1.3"/><rect x="1236.5" y="65.5" width="10.5" height="1.3"/><rect x="1236.5" y="69.6" width="10.5" height="1.3"/></g><path d="M1117.14,100.7 L1113,105.3 L1117.14,109.89999999999999" stroke="#c0c0c0" stroke-width="1.7" fill="none"/><path d="M1201.64,100.7 L1197.5,105.3 L1201.64,109.89999999999999" stroke="#e0e0e0" stroke-width="1.7" fill="none"/><path d="M1119.5,394.95 L1125,400.45 L1130.5,394.95" stroke="#e6e6e6" stroke-width="2.3" fill="none"/><rect x="1147.7" y="387" width="2.2" height="21.5" fill="#111"/><path d="M1249.75,394.825 L1255.5,400.575 L1261.25,394.825" stroke="#e6e6e6" stroke-width="2.3" fill="none"/><rect x="1281.9" y="387" width="2.2" height="21.5" fill="#111"/><g stroke="#a9a9a9" stroke-width="1.4" fill="none"><path d="M1312,405 L1298.7,405 L1298.7,390.3 L1316,390.3 L1316,399"/></g><polygon points="1309,392 1303.5,398.5 1307,398.5 1305,403.5 1311.5,396.5 1308,396.5 1310.5,392" fill="#a9a9a9"/><polygon points="1310.5,401 1317.5,401 1314,404.8" fill="#a9a9a9"/><rect x="1328.8" y="390.3" width="17.5" height="14.5" fill="none" stroke="#a9a9a9" stroke-width="1.3"/><rect x="1329.5" y="391.0" width="3.3" height="3.3" fill="#a9a9a9"/><rect x="1332.8" y="391.0" width="3.3" height="3.3" fill="#3a3a3a"/><rect x="1336.1" y="391.0" width="3.3" height="3.3" fill="#a9a9a9"/><rect x="1339.4" y="391.0" width="3.3" height="3.3" fill="#3a3a3a"/><rect x="1342.7" y="391.0" width="3.3" height="3.3" fill="#a9a9a9"/><rect x="1329.5" y="394.3" width="3.3" height="3.3" fill="#3a3a3a"/><rect x="1332.8" y="394.3" width="3.3" height="3.3" fill="#a9a9a9"/><rect x="1336.1" y="394.3" width="3.3" height="3.3" fill="#3a3a3a"/><rect x="1339.4" y="394.3" width="3.3" height="3.3" fill="#a9a9a9"/><rect x="1342.7" y="394.3" width="3.3" height="3.3" fill="#3a3a3a"/><rect x="1329.5" y="397.6" width="3.3" height="3.3" fill="#a9a9a9"/><rect x="1332.8" y="397.6" width="3.3" height="3.3" fill="#3a3a3a"/><rect x="1336.1" y="397.6" width="3.3" height="3.3" fill="#a9a9a9"/><rect x="1339.4" y="397.6" width="3.3" height="3.3" fill="#3a3a3a"/><rect x="1342.7" y="397.6" width="3.3" height="3.3" fill="#a9a9a9"/><rect x="1329.5" y="400.9" width="3.3" height="3.3" fill="#3a3a3a"/><rect x="1332.8" y="400.9" width="3.3" height="3.3" fill="#a9a9a9"/><rect x="1336.1" y="400.9" width="3.3" height="3.3" fill="#3a3a3a"/><rect x="1339.4" y="400.9" width="3.3" height="3.3" fill="#a9a9a9"/><rect x="1342.7" y="400.9" width="3.3" height="3.3" fill="#3a3a3a"/><rect x="1355" y="385" width="24.6" height="24.6" rx="4" fill="#4b4b4b"/><path d="M1360.5,392.5 L1366,387.8 L1374.5,388.3 L1374.5,403.5 L1360.5,403.5 Z" fill="#4b4b4b" stroke="#d0d0d0" stroke-width="1.3"/><g fill="#d0d0d0"><circle cx="1360.5" cy="392.5" r="1.2"/><circle cx="1366" cy="387.8" r="1.2"/><circle cx="1374.5" cy="388.3" r="1.2"/><circle cx="1374.5" cy="396" r="1.2"/><circle cx="1374.5" cy="403.5" r="1.2"/><circle cx="1360.5" cy="403.5" r="1.2"/><circle cx="1360.5" cy="398" r="1.2"/></g><rect x="1388.6" y="390" width="17.3" height="14.6" rx="1" fill="none" stroke="#a9a9a9" stroke-width="1.4"/><rect x="1393" y="394" width="8.8" height="6.6" fill="#a9a9a9"/><rect x="1418.6" y="390" width="17.3" height="13" fill="none" stroke="#a9a9a9" stroke-width="1.3"/><path d="M1427.2,388 L1427.2,406 M1416.5,396.5 L1438,396.5" stroke="#a9a9a9" stroke-width="0.9" stroke-dasharray="1.2 1.2"/><polygon points="1430,404 1435.5,404 1432.7,407" fill="#a9a9a9"/><rect x="1449.9" y="387" width="2.2" height="21.5" fill="#111"/><circle cx="1474" cy="392.5" r="3.7" fill="#ea2323"/><circle cx="1470.6" cy="398.2" r="3.7" fill="#25b33f"/><circle cx="1477.6" cy="398.2" r="3.7" fill="#3d7cf0"/><path d="M1481.5,387 L1481.5,393 M1478.5,390 L1484.5,390" stroke="#d0d0d0" stroke-width="1.2"/><polygon points="1474,403.5 1479.5,403.5 1476.7,406.5" fill="#b0b0b0"/><circle cx="1505" cy="397.3" r="7.4" fill="#a9a9a9"/><g stroke="#1d1d1d" stroke-width="1.1"><path d="M1507.4,397.3 L1511.2725506733136,401.5912827978023"/><path d="M1506.1999949102542,399.37846390764054 L1504.4198968623236,404.87782820798003"/><path d="M1503.7999898205298,399.3784550919296 L1498.1473486494913,400.5865132691611"/><path d="M1502.6000000000647,397.29998236861553 L1498.7274808523794,393.00867112158323"/><path d="M1503.8000203590268,395.22152727676075 L1505.5801588074953,389.72217605390006"/><path d="M1506.2000254486215,395.2215537238936 L1511.8526754943985,394.0135370733154"/></g><circle cx="1505" cy="397.3" r="2.4" fill="#1d1d1d"/><rect x="1574.7" y="387" width="2.2" height="21.5" fill="#111"/><path d="M1591,395 Q1591,393 1593,393 L1595.5,393 L1597,391 L1603.5,391 L1605,393 L1607,393 Q1609,393 1609,395 L1609,405 L1591,405 Z" fill="#a9a9a9"/><circle cx="1600" cy="398.5" r="3.6" fill="none" stroke="#1d1d1d" stroke-width="1.4"/><path d="M1620.5,399 Q1628,390.5 1635.5,399 Q1628,407.5 1620.5,399 Z" fill="#8a8a8a"/><circle cx="1628" cy="399" r="2.6" fill="#1d1d1d"/><circle cx="1628" cy="399" r="1.2" fill="#8a8a8a"/><rect x="1630" y="389.5" width="9.5" height="7.5" rx="1.2" fill="#1d1d1d" stroke="#8a8a8a" stroke-width="1.2"/><circle cx="1634.8" cy="393.3" r="1.8" fill="none" stroke="#8a8a8a" stroke-width="1"/><rect x="1652.3000000000002" y="387" width="2.2" height="21.5" fill="#111"/><rect x="1762.2" y="387" width="2.2" height="21.5" fill="#111"/><g stroke="#a9a9a9" stroke-width="1.3" fill="none"><polygon points="1797.5,388.5 1804,391.5 1804,398 1797.5,401 1791,398 1791,391.5"/><path d="M1791,391.5 L1797.5,395 L1804,391.5 M1797.5,395 L1797.5,401"/></g><polygon points="1806,396 1801.5,402 1804.5,402 1802.5,406 1808,400 1805,400 1807.5,396" fill="#a9a9a9"/><g fill="#a0a0a0"><rect x="1885" y="133.2" width="10.3" height="1.4"/><rect x="1885" y="137.2" width="10.3" height="1.4"/><rect x="1885" y="141.2" width="10.3" height="1.4"/></g><path d="M711,429 L717.2,435.2 M717.2,429 L711,435.2" stroke="#9c9c9c" stroke-width="1.3"/><g fill="#8e8e8e"><rect x="814" y="428.6" width="10" height="1.3"/><rect x="814" y="432.6" width="10" height="1.3"/><rect x="814" y="436.6" width="10" height="1.3"/></g><rect x="710" y="445.2" width="114" height="2" rx="1" fill="#dcdcdc"/><g stroke="#cfcfcf" stroke-width="1.8" fill="none"><path d="M1836,428.3 L1840.5,433 L1836,437.7"/><path d="M1842.3,428.3 L1846.8,433 L1842.3,437.7"/></g><circle cx="137.6" cy="467.2" r="4.3" stroke="#bcbcbc" stroke-width="1.3" fill="none"/><path d="M140.6,470.5 L145.6,476" stroke="#bcbcbc" stroke-width="1.4"/><path d="M144.6,469.2 L148,472.6 L151.6,469.2" stroke="#bcbcbc" stroke-width="1.2" fill="none"/><g fill="#a9a9a9"><rect x="656" y="464" width="5.5" height="4.6" rx="1"/><rect x="667" y="464" width="6" height="4.6" rx="1"/><rect x="667" y="471" width="6" height="4.6" rx="1"/><rect x="653" y="465.7" width="3" height="1.2"/><rect x="661" y="465.7" width="6" height="1.2"/><rect x="663" y="465.7" width="1.2" height="8"/><rect x="663" y="472.8" width="4" height="1.2"/><polygon points="669.5,476.5 674.5,476.5 672,480"/></g><rect x="683.3" y="472" width="20.5" height="6" fill="#3e3e3e"/><path d="M687.3,469.2 A6.2,6.6 0 0 1 699.7,469.2 Z" fill="#a9a9a9"/><circle cx="691.1" cy="466.6" r="1.5" fill="#1d1d1d"/><circle cx="695.9" cy="466.6" r="1.5" fill="#1d1d1d"/><rect x="692.0" y="468" width="3" height="7.4" rx="1.2" fill="#a9a9a9"/><rect x="685.9" y="471" width="5.4" height="1.5" fill="#a9a9a9"/><rect x="695.7" y="471" width="5.4" height="1.5" fill="#a9a9a9"/><rect x="720" y="461.5" width="11.5" height="14" rx="1" fill="#a9a9a9"/><path d="M715,466 L715,479.5 L728,479.5" stroke="#a9a9a9" stroke-width="1.6" fill="none"/><g fill="#1d1d1d"><rect x="721" y="462.5" width="1" height="1.3"/><rect x="729.5" y="462.5" width="1" height="1.3"/><rect x="721" y="465.3" width="1" height="1.3"/><rect x="729.5" y="465.3" width="1" height="1.3"/><rect x="721" y="468.1" width="1" height="1.3"/><rect x="729.5" y="468.1" width="1" height="1.3"/><rect x="721" y="470.9" width="1" height="1.3"/><rect x="729.5" y="470.9" width="1" height="1.3"/><rect x="721" y="473.7" width="1" height="1.3"/><rect x="729.5" y="473.7" width="1" height="1.3"/></g><rect x="723.5" y="468" width="4.5" height="1.3" fill="#1d1d1d"/><rect x="740.8" y="458" width="24.6" height="24.8" rx="4" fill="#4b4b4b"/><g stroke="#d8d8d8" stroke-width="1.3" fill="#4b4b4b"><circle cx="750" cy="473" r="5.6"/><circle cx="752" cy="471" r="5.6"/><circle cx="755.6" cy="467.5" r="5.8" fill="#707070"/></g><rect x="775" y="463" width="18" height="16" fill="none" stroke="#a9a9a9" stroke-width="1.4"/><path d="M777.5,466.5 C782,466 785,476 791,475.5" stroke="#a9a9a9" stroke-width="1.3" fill="none"/><g fill="#a9a9a9"><rect x="778.0" y="460" width="1.1" height="3"/><rect x="781.8" y="460" width="1.1" height="3"/><rect x="785.6" y="460" width="1.1" height="3"/><rect x="789.4" y="460" width="1.1" height="3"/><rect x="773.3" y="466" width="2" height="1.1"/><rect x="773.3" y="470" width="2" height="1.1"/><rect x="773.3" y="474" width="2" height="1.1"/></g><path d="M10,505 Q16.5,497.8 23,505 Q16.5,512.2 10,505 Z" fill="#c0c0c0"/><circle cx="16.5" cy="505" r="2.3" fill="#1d1d1d"/><path d="M27.5,501.5 L30.5,501.5 L34.5,498 L34.5,512 L30.5,508.5 L27.5,508.5 Z" fill="#b0b0b0"/><path d="M37,501.5 Q39,505 37,508.5 M39.5,499.5 Q43,505 39.5,510.5" stroke="#b0b0b0" stroke-width="1.5" fill="none"/><circle cx="53.5" cy="505" r="4.6" fill="#b8b8b8"/><path d="M68.5,503.5 L68.5,501 A3.5,3.5 0 0 1 75.5,501 L75.5,503.5" stroke="#b0b0b0" stroke-width="1.7" fill="none"/><rect x="66" y="503.2" width="12" height="8" rx="1" fill="#b0b0b0"/><rect x="71.3" y="505.5" width="1.6" height="3.4" fill="#1d1d1d"/><rect x="85.0" y="498" width="2.5" height="13" fill="#0f0f0f"/><rect x="124.3" y="498" width="2.5" height="13" fill="#0f0f0f"/><rect x="165.3" y="498" width="2.5" height="13" fill="#0f0f0f"/><rect x="466.6" y="498" width="2.5" height="13" fill="#0f0f0f"/><rect x="642.6999999999999" y="498" width="2.5" height="13" fill="#0f0f0f"/><rect x="788.4" y="498" width="2.5" height="13" fill="#0f0f0f"/><path d="M104,501.5 L104,498.5 Q104,498 104.5,498 L111,498 L118.5,505.5 L112,512.5 Z" fill="#b2b2b2"/><circle cx="106.8" cy="501" r="1.1" fill="#1d1d1d"/><path d="M476.8,504.7 A6.2,6.6 0 0 1 489.2,504.7 Z" fill="#bdbdbd"/><circle cx="480.6" cy="502.1" r="1.5" fill="#1d1d1d"/><circle cx="485.4" cy="502.1" r="1.5" fill="#1d1d1d"/><rect x="481.5" y="503.5" width="3" height="7.4" rx="1.2" fill="#bdbdbd"/><rect x="475.4" y="506.5" width="5.4" height="1.5" fill="#bdbdbd"/><rect x="485.2" y="506.5" width="5.4" height="1.5" fill="#bdbdbd"/><circle cx="502" cy="505" r="2.5" fill="none" stroke="#a0a0a0" stroke-width="1.3"/><path d="M505.6,505.0 L507.8,505.0" stroke="#a0a0a0" stroke-width="1.2"/><path d="M504.5455844122716,507.5455844122716 L506.101219330882,509.101219330882" stroke="#a0a0a0" stroke-width="1.2"/><path d="M502.0,508.6 L502.0,510.8" stroke="#a0a0a0" stroke-width="1.2"/><path d="M499.4544155877284,507.5455844122716 L497.898780669118,509.101219330882" stroke="#a0a0a0" stroke-width="1.2"/><path d="M498.4,505.0 L496.2,505.0" stroke="#a0a0a0" stroke-width="1.2"/><path d="M499.4544155877284,502.4544155877284 L497.898780669118,500.898780669118" stroke="#a0a0a0" stroke-width="1.2"/><path d="M502.0,501.4 L502.0,499.2" stroke="#a0a0a0" stroke-width="1.2"/><path d="M504.5455844122716,502.4544155877284 L506.101219330882,500.898780669118" stroke="#a0a0a0" stroke-width="1.2"/><path d="M514.5,498 L527,511" stroke="#b0b0b0" stroke-width="1.6" stroke-dasharray="1.6 1"/><rect x="553" y="498.5" width="12.5" height="11.5" fill="#a8a8a8"/><path d="M550.5,501 L550.5,512 L562,512" stroke="#a8a8a8" stroke-width="1.3" fill="none"/><rect x="556.5" y="503.5" width="5.5" height="1.3" fill="#1d1d1d"/><g stroke="#a8a8a8" stroke-width="1.1" fill="#1d1d1d"><circle cx="573.5" cy="508" r="4.2"/><circle cx="575.5" cy="506" r="4.2"/></g><circle cx="579" cy="502.5" r="5" fill="#8a8a8a" stroke="#a8a8a8" stroke-width="1.1"/><circle cx="595.5" cy="505" r="6" fill="#bdbdbd"/><path d="M591.2,509.2 L599.7,500.8 A6,6 0 0 0 591.2,509.2 Z" fill="#1d1d1d"/><g stroke="#a8a8a8" stroke-width="1.2" fill="none" stroke-linejoin="round"><polygon points="614.5,499.0 620.5,502.2 620.5,507.8 614.5,511.0 608.5,507.8 608.5,502.2"/><path d="M608.5,502.2 L614.5,505.4 L620.5,502.2 M614.5,505.4 L614.5,511.0"/></g><path d="M819,455.2 L815.5,455.2 A4.5,5.2 0 0 0 815.5,465.6 L819,465.6 Z" fill="#3d93f0"/><rect x="1823" y="455.2" width="4.5" height="10.4" fill="#3a342c"/><path d="M1815,455.2 L1818.5,455.2 A4.5,5.2 0 0 1 1818.5,465.6 L1815,465.6 Z" fill="#3d93f0"/><rect x="1637.8" y="455.5" width="1.2" height="10" fill="#3d93f0"/><rect x="818.9" y="484" width="1.2" height="6" fill="#9a9a9a"/><rect x="882.61" y="484" width="1.2" height="6" fill="#9a9a9a"/><rect x="946.3199999999999" y="484" width="1.2" height="6" fill="#9a9a9a"/><rect x="1010.03" y="484" width="1.2" height="6" fill="#9a9a9a"/><rect x="1073.74" y="484" width="1.2" height="6" fill="#9a9a9a"/><rect x="1137.45" y="484" width="1.2" height="6" fill="#9a9a9a"/><rect x="1201.16" y="484" width="1.2" height="6" fill="#9a9a9a"/><rect x="1264.8700000000001" y="484" width="1.2" height="6" fill="#9a9a9a"/><rect x="1328.5800000000002" y="484" width="1.2" height="6" fill="#9a9a9a"/><rect x="1392.29" y="484" width="1.2" height="6" fill="#9a9a9a"/><rect x="1456.0" y="484" width="1.2" height="6" fill="#9a9a9a"/><rect x="1519.71" y="484" width="1.2" height="6" fill="#9a9a9a"/><rect x="1583.42" y="484" width="1.2" height="6" fill="#9a9a9a"/><rect x="1647.13" y="484" width="1.2" height="6" fill="#9a9a9a"/><rect x="1710.8400000000001" y="484" width="1.2" height="6" fill="#9a9a9a"/><rect x="1774.5500000000002" y="484" width="1.2" height="6" fill="#9a9a9a"/><path d="M1641,474 Q1641,472.6 1642.5,472.6 L1653.5,472.6 Q1655,472.6 1655,474 L1655,481 L1648,489.8 L1641,481 Z" fill="#3d93f0"/><path d="M1646,483 L1650,483 M1648,483 L1648,488" stroke="#1d3a60" stroke-width="0.9"/><path d="M820,492.5 L816.5,492.5 A4.5,9.7 0 0 0 816.5,511.9 L820,511.9 Z" fill="#3d93f0"/><rect x="821.0" y="493.2" width="20.5" height="14" fill="#b6b6b6" stroke="#5a5a5a" stroke-width="0.6"/><polygon points="813.0,511 813.0,505 819.5,498.5 826.0,505 826.0,511" fill="#b6b6b6" stroke="#5a5a5a" stroke-width="0.6"/><text x="827.8" y="506" font-family="Liberation Sans" font-size="13" fill="#141414">5</text><rect x="1204.0" y="493.2" width="20.5" height="14" fill="#b6b6b6" stroke="#5a5a5a" stroke-width="0.6"/><polygon points="1196.0,511 1196.0,505 1202.5,498.5 1209.0,505 1209.0,511" fill="#b6b6b6" stroke="#5a5a5a" stroke-width="0.6"/><text x="1210.8" y="506" font-family="Liberation Sans" font-size="13" fill="#141414">6</text><path d="M1840,495.5 L1853.5,495.5 L1853.5,506.5 L1846.7,512.5 L1840,506.5 Z" fill="#b8b8b8"/><path d="M1846,520 L1840,530.5 L1846,530.5" stroke="#b8b8b8" stroke-width="1.3" fill="none"/><rect x="1846" y="523.5" width="8" height="7" fill="#b8b8b8"/><circle cx="1845.5" cy="531" r="3" fill="#1d1d1d" stroke="#b8b8b8" stroke-width="1.3"/><path d="M8.6,526.9 Q15.5,518.6999999999999 22.4,526.9 Q15.5,535.1 8.6,526.9 Z" fill="#cdcdcd"/><circle cx="15.5" cy="526.9" r="2.9" fill="#151515"/><circle cx="15.5" cy="526.9" r="1.3" fill="#555"/><path d="M93.2,522.4 L97.7,527.4 L93.2,532.4" stroke="#b4b4b4" stroke-width="2.1" fill="none"/><path d="M476.40000000000003,526.7 A6.2,6.6 0 0 1 488.8,526.7 Z" fill="#e2e2e2"/><circle cx="480.20000000000005" cy="524.1" r="1.5" fill="#161616"/><circle cx="485.0" cy="524.1" r="1.5" fill="#161616"/><rect x="481.1" y="525.5" width="3" height="7.4" rx="1.2" fill="#e2e2e2"/><rect x="475.0" y="528.5" width="5.4" height="1.5" fill="#e2e2e2"/><rect x="484.8" y="528.5" width="5.4" height="1.5" fill="#e2e2e2"/><path d="M514.4,533.1999999999999 L526.0,520.6" stroke="#cfcfcf" stroke-width="1.6"/><circle cx="595.3000000000001" cy="526.9" r="6" fill="#cfcfcf"/><path d="M591.1,531.1 L599.5,522.6999999999999 A6,6 0 0 0 591.1,531.1 Z" fill="#121212"/><polyline points="659.19,528.30 658.93,528.51 658.60,528.67 658.23,528.75 657.82,528.76 657.39,528.67 656.98,528.48 656.59,528.19 656.26,527.81 656.00,527.35 655.84,526.82 655.79,526.25 655.86,525.65 656.07,525.06 656.40,524.50 656.86,524.01 657.42,523.60 658.09,523.31 658.82,523.15 659.59,523.15 660.37,523.31 661.12,523.64 661.81,524.12 662.41,524.75 662.88,525.51 663.19,526.38 663.33,527.31 663.27,528.28 663.01,529.24 662.56,530.14 661.91,530.96 661.10,531.65 660.14,532.17 659.07,532.49 657.94,532.60 656.78,532.47 655.65,532.10 654.59,531.51 653.66,530.70 652.89,529.69 652.33,528.53 652.01,527.26 651.94,525.93 652.15,524.58 652.64,523.28 653.38,522.09 654.37,521.04 655.57,520.21 656.93,519.62 658.41,519.31 659.94,519.30 661.47,519.60 662.93,520.21 664.26,521.12 665.40,522.29" stroke="#9c9c9c" stroke-width="1.4" fill="none"/><path d="M763,523.9 L768.5,529.4 L774,523.9" stroke="#e8e8e8" stroke-width="2" fill="none"/><path d="M8.6,548.11 Q15.5,539.91 22.4,548.11 Q15.5,556.3100000000001 8.6,548.11 Z" fill="#cdcdcd"/><circle cx="15.5" cy="548.11" r="2.9" fill="#151515"/><circle cx="15.5" cy="548.11" r="1.3" fill="#555"/><path d="M93.2,543.61 L97.7,548.61 L93.2,553.61" stroke="#b4b4b4" stroke-width="2.1" fill="none"/><path d="M174,539.8100000000001 L182.5,539.8100000000001 L186.5,543.8100000000001 L186.5,556.3100000000001 L174,556.3100000000001 Z" fill="#f4f4f4"/><path d="M182.5,539.8100000000001 L182.5,543.8100000000001 L186.5,543.8100000000001" fill="#cfcfcf"/><rect x="176.5" y="545.8100000000001" width="7.5" height="6.5" fill="#2b87f0"/><polygon points="176.5,552.3100000000001 180,547.8100000000001 183,550.8100000000001 184.0,548.3100000000001 184.0,552.3100000000001" fill="#6cc3ff"/><circle cx="182.0" cy="548.3100000000001" r="1.2" fill="#fff"/><path d="M476.40000000000003,547.9100000000001 A6.2,6.6 0 0 1 488.8,547.9100000000001 Z" fill="#e2e2e2"/><circle cx="480.20000000000005" cy="545.3100000000001" r="1.5" fill="#161616"/><circle cx="485.0" cy="545.3100000000001" r="1.5" fill="#161616"/><rect x="481.1" y="546.71" width="3" height="7.4" rx="1.2" fill="#e2e2e2"/><rect x="475.0" y="549.71" width="5.4" height="1.5" fill="#e2e2e2"/><rect x="484.8" y="549.71" width="5.4" height="1.5" fill="#e2e2e2"/><path d="M514.4,554.41 L526.0,541.8100000000001" stroke="#cfcfcf" stroke-width="1.6"/><polyline points="659.19,549.51 658.93,549.72 658.60,549.88 658.23,549.96 657.82,549.97 657.39,549.88 656.98,549.69 656.59,549.40 656.26,549.02 656.00,548.56 655.84,548.03 655.79,547.46 655.86,546.86 656.07,546.27 656.40,545.71 656.86,545.22 657.42,544.81 658.09,544.52 658.82,544.36 659.59,544.36 660.37,544.52 661.12,544.85 661.81,545.33 662.41,545.96 662.88,546.72 663.19,547.59 663.33,548.52 663.27,549.49 663.01,550.45 662.56,551.35 661.91,552.17 661.10,552.86 660.14,553.38 659.07,553.70 657.94,553.81 656.78,553.68 655.65,553.31 654.59,552.72 653.66,551.91 652.89,550.90 652.33,549.74 652.01,548.47 651.94,547.14 652.15,545.79 652.64,544.49 653.38,543.30 654.37,542.25 655.57,541.42 656.93,540.83 658.41,540.52 659.94,540.51 661.47,540.81 662.93,541.42 664.26,542.33 665.40,543.50" stroke="#9c9c9c" stroke-width="1.4" fill="none"/><path d="M763,545.11 L768.5,550.61 L774,545.11" stroke="#e8e8e8" stroke-width="2" fill="none"/><path d="M8.6,569.3199999999999 Q15.5,561.1199999999999 22.4,569.3199999999999 Q15.5,577.52 8.6,569.3199999999999 Z" fill="#cdcdcd"/><circle cx="15.5" cy="569.3199999999999" r="2.9" fill="#151515"/><circle cx="15.5" cy="569.3199999999999" r="1.3" fill="#555"/><path d="M93.2,564.8199999999999 L97.7,569.8199999999999 L93.2,574.8199999999999" stroke="#b4b4b4" stroke-width="2.1" fill="none"/><path d="M476.40000000000003,569.12 A6.2,6.6 0 0 1 488.8,569.12 Z" fill="#e2e2e2"/><circle cx="480.20000000000005" cy="566.52" r="1.5" fill="#161616"/><circle cx="485.0" cy="566.52" r="1.5" fill="#161616"/><rect x="481.1" y="567.92" width="3" height="7.4" rx="1.2" fill="#e2e2e2"/><rect x="475.0" y="570.92" width="5.4" height="1.5" fill="#e2e2e2"/><rect x="484.8" y="570.92" width="5.4" height="1.5" fill="#e2e2e2"/><path d="M514.4,575.6199999999999 L526.0,563.02" stroke="#cfcfcf" stroke-width="1.6"/><circle cx="595.3000000000001" cy="569.3199999999999" r="6" fill="#cfcfcf"/><path d="M591.1,573.52 L599.5,565.1199999999999 A6,6 0 0 0 591.1,573.52 Z" fill="#121212"/><polyline points="659.19,570.72 658.93,570.93 658.60,571.09 658.23,571.17 657.82,571.18 657.39,571.09 656.98,570.90 656.59,570.61 656.26,570.23 656.00,569.77 655.84,569.24 655.79,568.67 655.86,568.07 656.07,567.48 656.40,566.92 656.86,566.43 657.42,566.02 658.09,565.73 658.82,565.57 659.59,565.57 660.37,565.73 661.12,566.06 661.81,566.54 662.41,567.17 662.88,567.93 663.19,568.80 663.33,569.73 663.27,570.70 663.01,571.66 662.56,572.56 661.91,573.38 661.10,574.07 660.14,574.59 659.07,574.91 657.94,575.02 656.78,574.89 655.65,574.52 654.59,573.93 653.66,573.12 652.89,572.11 652.33,570.95 652.01,569.68 651.94,568.35 652.15,567.00 652.64,565.70 653.38,564.51 654.37,563.46 655.57,562.63 656.93,562.04 658.41,561.73 659.94,561.72 661.47,562.02 662.93,562.63 664.26,563.54 665.40,564.71" stroke="#9c9c9c" stroke-width="1.4" fill="none"/><path d="M763,566.3199999999999 L768.5,571.8199999999999 L774,566.3199999999999" stroke="#e8e8e8" stroke-width="2" fill="none"/><path d="M8.6,590.53 Q15.5,582.3299999999999 22.4,590.53 Q15.5,598.73 8.6,590.53 Z" fill="#cdcdcd"/><circle cx="15.5" cy="590.53" r="2.9" fill="#151515"/><circle cx="15.5" cy="590.53" r="1.3" fill="#555"/><path d="M93.2,586.03 L97.7,591.03 L93.2,596.03" stroke="#b4b4b4" stroke-width="2.1" fill="none"/><path d="M476.40000000000003,590.33 A6.2,6.6 0 0 1 488.8,590.33 Z" fill="#e2e2e2"/><circle cx="480.20000000000005" cy="587.73" r="1.5" fill="#161616"/><circle cx="485.0" cy="587.73" r="1.5" fill="#161616"/><rect x="481.1" y="589.13" width="3" height="7.4" rx="1.2" fill="#e2e2e2"/><rect x="475.0" y="592.13" width="5.4" height="1.5" fill="#e2e2e2"/><rect x="484.8" y="592.13" width="5.4" height="1.5" fill="#e2e2e2"/><path d="M514.4,596.8299999999999 L526.0,584.23" stroke="#cfcfcf" stroke-width="1.6"/><rect x="606.6999999999999" y="580.93" width="15" height="20.21" fill="#151515"/><g stroke="#b8b8b8" stroke-width="1.3"><path d="M614.0,592.13 L614.0,586.53"/><path d="M614.0,592.13 L609.4,595.03"/><path d="M614.0,592.13 L618.6,595.03"/></g><g fill="#b8b8b8"><polygon points="614.0,584.03 611.8,587.3299999999999 616.2,587.3299999999999"/><polygon points="608.0,596.03 611.4,596.3299999999999 609.4,593.03"/><polygon points="620.0,596.03 616.6,596.3299999999999 618.6,593.03"/></g><polyline points="659.19,591.93 658.93,592.14 658.60,592.30 658.23,592.38 657.82,592.39 657.39,592.30 656.98,592.11 656.59,591.82 656.26,591.44 656.00,590.98 655.84,590.45 655.79,589.88 655.86,589.28 656.07,588.69 656.40,588.13 656.86,587.64 657.42,587.23 658.09,586.94 658.82,586.78 659.59,586.78 660.37,586.94 661.12,587.27 661.81,587.75 662.41,588.38 662.88,589.14 663.19,590.01 663.33,590.94 663.27,591.91 663.01,592.87 662.56,593.77 661.91,594.59 661.10,595.28 660.14,595.80 659.07,596.12 657.94,596.23 656.78,596.10 655.65,595.73 654.59,595.14 653.66,594.33 652.89,593.32 652.33,592.16 652.01,590.89 651.94,589.56 652.15,588.21 652.64,586.91 653.38,585.72 654.37,584.67 655.57,583.84 656.93,583.25 658.41,582.94 659.94,582.93 661.47,583.23 662.93,583.84 664.26,584.75 665.40,585.92" stroke="#9c9c9c" stroke-width="1.4" fill="none"/><path d="M763,587.53 L768.5,593.03 L774,587.53" stroke="#e8e8e8" stroke-width="2" fill="none"/><path d="M8.6,611.74 Q15.5,603.54 22.4,611.74 Q15.5,619.94 8.6,611.74 Z" fill="#cdcdcd"/><circle cx="15.5" cy="611.74" r="2.9" fill="#151515"/><circle cx="15.5" cy="611.74" r="1.3" fill="#555"/><path d="M93.2,607.24 L97.7,612.24 L93.2,617.24" stroke="#b4b4b4" stroke-width="2.1" fill="none"/><path d="M476.40000000000003,611.5400000000001 A6.2,6.6 0 0 1 488.8,611.5400000000001 Z" fill="#e2e2e2"/><circle cx="480.20000000000005" cy="608.94" r="1.5" fill="#161616"/><circle cx="485.0" cy="608.94" r="1.5" fill="#161616"/><rect x="481.1" y="610.34" width="3" height="7.4" rx="1.2" fill="#e2e2e2"/><rect x="475.0" y="613.34" width="5.4" height="1.5" fill="#e2e2e2"/><rect x="484.8" y="613.34" width="5.4" height="1.5" fill="#e2e2e2"/><path d="M514.4,618.04 L526.0,605.44" stroke="#cfcfcf" stroke-width="1.6"/><rect x="606.6999999999999" y="602.14" width="15" height="20.21" fill="#151515"/><g stroke="#b8b8b8" stroke-width="1.3"><path d="M614.0,613.34 L614.0,607.74"/><path d="M614.0,613.34 L609.4,616.24"/><path d="M614.0,613.34 L618.6,616.24"/></g><g fill="#b8b8b8"><polygon points="614.0,605.24 611.8,608.54 616.2,608.54"/><polygon points="608.0,617.24 611.4,617.54 609.4,614.24"/><polygon points="620.0,617.24 616.6,617.54 618.6,614.24"/></g><polyline points="659.19,613.14 658.93,613.35 658.60,613.51 658.23,613.59 657.82,613.60 657.39,613.51 656.98,613.32 656.59,613.03 656.26,612.65 656.00,612.19 655.84,611.66 655.79,611.09 655.86,610.49 656.07,609.90 656.40,609.34 656.86,608.85 657.42,608.44 658.09,608.15 658.82,607.99 659.59,607.99 660.37,608.15 661.12,608.48 661.81,608.96 662.41,609.59 662.88,610.35 663.19,611.22 663.33,612.15 663.27,613.12 663.01,614.08 662.56,614.98 661.91,615.80 661.10,616.49 660.14,617.01 659.07,617.33 657.94,617.44 656.78,617.31 655.65,616.94 654.59,616.35 653.66,615.54 652.89,614.53 652.33,613.37 652.01,612.10 651.94,610.77 652.15,609.42 652.64,608.12 653.38,606.93 654.37,605.88 655.57,605.05 656.93,604.46 658.41,604.15 659.94,604.14 661.47,604.44 662.93,605.05 664.26,605.96 665.40,607.13" stroke="#9c9c9c" stroke-width="1.4" fill="none"/><path d="M763,608.74 L768.5,614.24 L774,608.74" stroke="#e8e8e8" stroke-width="2" fill="none"/><path d="M8.6,632.9499999999999 Q15.5,624.7499999999999 22.4,632.9499999999999 Q15.5,641.15 8.6,632.9499999999999 Z" fill="#cdcdcd"/><circle cx="15.5" cy="632.9499999999999" r="2.9" fill="#151515"/><circle cx="15.5" cy="632.9499999999999" r="1.3" fill="#555"/><path d="M93.2,628.4499999999999 L97.7,633.4499999999999 L93.2,638.4499999999999" stroke="#b4b4b4" stroke-width="2.1" fill="none"/><rect x="171.5" y="627.9499999999999" width="10" height="10" rx="1.3" fill="#b0b0b0"/><polygon points="181,631.4499999999999 187.5,627.4499999999999 187.5,638.4499999999999 181,634.4499999999999" fill="#b0b0b0"/><path d="M476.40000000000003,632.75 A6.2,6.6 0 0 1 488.8,632.75 Z" fill="#e2e2e2"/><circle cx="480.20000000000005" cy="630.15" r="1.5" fill="#161616"/><circle cx="485.0" cy="630.15" r="1.5" fill="#161616"/><rect x="481.1" y="631.55" width="3" height="7.4" rx="1.2" fill="#e2e2e2"/><rect x="475.0" y="634.55" width="5.4" height="1.5" fill="#e2e2e2"/><rect x="484.8" y="634.55" width="5.4" height="1.5" fill="#e2e2e2"/><rect x="606.6999999999999" y="623.3499999999999" width="15" height="20.21" fill="#151515"/><g stroke="#b8b8b8" stroke-width="1.3"><path d="M614.0,634.55 L614.0,628.9499999999999"/><path d="M614.0,634.55 L609.4,637.4499999999999"/><path d="M614.0,634.55 L618.6,637.4499999999999"/></g><g fill="#b8b8b8"><polygon points="614.0,626.4499999999999 611.8,629.7499999999999 616.2,629.7499999999999"/><polygon points="608.0,638.4499999999999 611.4,638.7499999999999 609.4,635.4499999999999"/><polygon points="620.0,638.4499999999999 616.6,638.7499999999999 618.6,635.4499999999999"/></g><polyline points="659.19,634.35 658.93,634.56 658.60,634.72 658.23,634.80 657.82,634.81 657.39,634.72 656.98,634.53 656.59,634.24 656.26,633.86 656.00,633.40 655.84,632.87 655.79,632.30 655.86,631.70 656.07,631.11 656.40,630.55 656.86,630.06 657.42,629.65 658.09,629.36 658.82,629.20 659.59,629.20 660.37,629.36 661.12,629.69 661.81,630.17 662.41,630.80 662.88,631.56 663.19,632.43 663.33,633.36 663.27,634.33 663.01,635.29 662.56,636.19 661.91,637.01 661.10,637.70 660.14,638.22 659.07,638.54 657.94,638.65 656.78,638.52 655.65,638.15 654.59,637.56 653.66,636.75 652.89,635.74 652.33,634.58 652.01,633.31 651.94,631.98 652.15,630.63 652.64,629.33 653.38,628.14 654.37,627.09 655.57,626.26 656.93,625.67 658.41,625.36 659.94,625.35 661.47,625.65 662.93,626.26 664.26,627.17 665.40,628.34" stroke="#9c9c9c" stroke-width="1.4" fill="none"/><path d="M763,629.9499999999999 L768.5,635.4499999999999 L774,629.9499999999999" stroke="#e8e8e8" stroke-width="2" fill="none"/><path d="M8.6,654.16 Q15.5,645.9599999999999 22.4,654.16 Q15.5,662.36 8.6,654.16 Z" fill="#cdcdcd"/><circle cx="15.5" cy="654.16" r="2.9" fill="#151515"/><circle cx="15.5" cy="654.16" r="1.3" fill="#555"/><path d="M93.2,649.66 L97.7,654.66 L93.2,659.66" stroke="#b4b4b4" stroke-width="2.1" fill="none"/><g fill="#b2b2b2"><rect x="174" y="647.86" width="11" height="1.9"/><rect x="174" y="647.86" width="1.5" height="3.6"/><rect x="183.5" y="647.86" width="1.5" height="3.6"/><rect x="178.4" y="647.86" width="2.2" height="12.4"/><rect x="176.3" y="658.76" width="6.4" height="1.5"/></g><rect x="194.6" y="648.56" width="11" height="11.4" fill="none" stroke="#141414" stroke-width="1.6" stroke-dasharray="1.6 1.4"/><circle cx="200.1" cy="654.16" r="2.2" fill="#0a0a0a"/><path d="M476.40000000000003,653.96 A6.2,6.6 0 0 1 488.8,653.96 Z" fill="#e2e2e2"/><circle cx="480.20000000000005" cy="651.36" r="1.5" fill="#161616"/><circle cx="485.0" cy="651.36" r="1.5" fill="#161616"/><rect x="481.1" y="652.76" width="3" height="7.4" rx="1.2" fill="#e2e2e2"/><rect x="475.0" y="655.76" width="5.4" height="1.5" fill="#e2e2e2"/><rect x="484.8" y="655.76" width="5.4" height="1.5" fill="#e2e2e2"/><circle cx="501.5" cy="654.16" r="2.2" fill="none" stroke="#777" stroke-width="1.1"/><path d="M504.7,654.16 L506.7,654.16" stroke="#777" stroke-width="1.1"/><path d="M503.76274169979695,656.4227416997969 L505.17695526217005,657.83695526217" stroke="#777" stroke-width="1.1"/><path d="M501.5,657.36 L501.5,659.36" stroke="#777" stroke-width="1.1"/><path d="M499.23725830020305,656.4227416997969 L497.82304473782995,657.83695526217" stroke="#777" stroke-width="1.1"/><path d="M498.3,654.16 L496.3,654.16" stroke="#777" stroke-width="1.1"/><path d="M499.23725830020305,651.897258300203 L497.82304473782995,650.4830447378299" stroke="#777" stroke-width="1.1"/><path d="M501.5,650.9599999999999 L501.5,648.9599999999999" stroke="#777" stroke-width="1.1"/><path d="M503.76274169979695,651.897258300203 L505.17695526217005,650.4830447378299" stroke="#777" stroke-width="1.1"/><path d="M514.4,660.4599999999999 L526.0,647.86" stroke="#cfcfcf" stroke-width="1.6"/><rect x="606.6999999999999" y="644.56" width="15" height="20.21" fill="#151515"/><g stroke="#b8b8b8" stroke-width="1.2" fill="none" stroke-linejoin="round"><polygon points="614.0,649.06 619.1,651.78 619.1,656.54 614.0,659.26 608.9,656.54 608.9,651.78"/><path d="M608.9,651.78 L614.0,654.5 L619.1,651.78 M614.0,654.5 L614.0,659.26"/></g><polyline points="659.19,655.56 658.93,655.77 658.60,655.93 658.23,656.01 657.82,656.02 657.39,655.93 656.98,655.74 656.59,655.45 656.26,655.07 656.00,654.61 655.84,654.08 655.79,653.51 655.86,652.91 656.07,652.32 656.40,651.76 656.86,651.27 657.42,650.86 658.09,650.57 658.82,650.41 659.59,650.41 660.37,650.57 661.12,650.90 661.81,651.38 662.41,652.01 662.88,652.77 663.19,653.64 663.33,654.57 663.27,655.54 663.01,656.50 662.56,657.40 661.91,658.22 661.10,658.91 660.14,659.43 659.07,659.75 657.94,659.86 656.78,659.73 655.65,659.36 654.59,658.77 653.66,657.96 652.89,656.95 652.33,655.79 652.01,654.52 651.94,653.19 652.15,651.84 652.64,650.54 653.38,649.35 654.37,648.30 655.57,647.47 656.93,646.88 658.41,646.57 659.94,646.56 661.47,646.86 662.93,647.47 664.26,648.38 665.40,649.55" stroke="#9c9c9c" stroke-width="1.4" fill="none"/><path d="M763,651.16 L768.5,656.66 L774,651.16" stroke="#e8e8e8" stroke-width="2" fill="none"/><path d="M8.6,675.37 Q15.5,667.17 22.4,675.37 Q15.5,683.57 8.6,675.37 Z" fill="#cdcdcd"/><circle cx="15.5" cy="675.37" r="2.9" fill="#151515"/><circle cx="15.5" cy="675.37" r="1.3" fill="#555"/><path d="M93.2,670.87 L97.7,675.87 L93.2,680.87" stroke="#b4b4b4" stroke-width="2.1" fill="none"/><polygon points="179.50,668.37 181.50,673.42 186.92,673.76 182.73,677.22 184.08,682.48 179.50,679.57 174.92,682.48 176.27,677.22 172.08,673.76 177.50,673.42" fill="#b0b0b0"/><circle cx="200.1" cy="675.57" r="2.6" fill="#c4c4c4"/><path d="M476.40000000000003,675.1700000000001 A6.2,6.6 0 0 1 488.8,675.1700000000001 Z" fill="#e2e2e2"/><circle cx="480.20000000000005" cy="672.57" r="1.5" fill="#161616"/><circle cx="485.0" cy="672.57" r="1.5" fill="#161616"/><rect x="481.1" y="673.97" width="3" height="7.4" rx="1.2" fill="#e2e2e2"/><rect x="475.0" y="676.97" width="5.4" height="1.5" fill="#e2e2e2"/><rect x="484.8" y="676.97" width="5.4" height="1.5" fill="#e2e2e2"/><circle cx="501.5" cy="675.37" r="2.2" fill="none" stroke="#777" stroke-width="1.1"/><path d="M504.7,675.37 L506.7,675.37" stroke="#777" stroke-width="1.1"/><path d="M503.76274169979695,677.632741699797 L505.17695526217005,679.0469552621701" stroke="#777" stroke-width="1.1"/><path d="M501.5,678.57 L501.5,680.57" stroke="#777" stroke-width="1.1"/><path d="M499.23725830020305,677.632741699797 L497.82304473782995,679.0469552621701" stroke="#777" stroke-width="1.1"/><path d="M498.3,675.37 L496.3,675.37" stroke="#777" stroke-width="1.1"/><path d="M499.23725830020305,673.1072583002031 L497.82304473782995,671.69304473783" stroke="#777" stroke-width="1.1"/><path d="M501.5,672.17 L501.5,670.17" stroke="#777" stroke-width="1.1"/><path d="M503.76274169979695,673.1072583002031 L505.17695526217005,671.69304473783" stroke="#777" stroke-width="1.1"/><path d="M514.4,681.67 L526.0,669.07" stroke="#cfcfcf" stroke-width="1.6"/><rect x="606.6999999999999" y="665.77" width="15" height="20.21" fill="#151515"/><g stroke="#b8b8b8" stroke-width="1.2" fill="none" stroke-linejoin="round"><polygon points="614.0,670.27 619.1,672.99 619.1,677.75 614.0,680.47 608.9,677.75 608.9,672.99"/><path d="M608.9,672.99 L614.0,675.71 L619.1,672.99 M614.0,675.71 L614.0,680.47"/></g><polyline points="659.19,676.77 658.93,676.98 658.60,677.14 658.23,677.22 657.82,677.23 657.39,677.14 656.98,676.95 656.59,676.66 656.26,676.28 656.00,675.82 655.84,675.29 655.79,674.72 655.86,674.12 656.07,673.53 656.40,672.97 656.86,672.48 657.42,672.07 658.09,671.78 658.82,671.62 659.59,671.62 660.37,671.78 661.12,672.11 661.81,672.59 662.41,673.22 662.88,673.98 663.19,674.85 663.33,675.78 663.27,676.75 663.01,677.71 662.56,678.61 661.91,679.43 661.10,680.12 660.14,680.64 659.07,680.96 657.94,681.07 656.78,680.94 655.65,680.57 654.59,679.98 653.66,679.17 652.89,678.16 652.33,677.00 652.01,675.73 651.94,674.40 652.15,673.05 652.64,671.75 653.38,670.56 654.37,669.51 655.57,668.68 656.93,668.09 658.41,667.78 659.94,667.77 661.47,668.07 662.93,668.68 664.26,669.59 665.40,670.76" stroke="#9c9c9c" stroke-width="1.4" fill="none"/><path d="M763,672.37 L768.5,677.87 L774,672.37" stroke="#e8e8e8" stroke-width="2" fill="none"/><path d="M8.6,696.58 Q15.5,688.38 22.4,696.58 Q15.5,704.7800000000001 8.6,696.58 Z" fill="#cdcdcd"/><circle cx="15.5" cy="696.58" r="2.9" fill="#151515"/><circle cx="15.5" cy="696.58" r="1.3" fill="#555"/><path d="M93.2,692.08 L97.7,697.08 L93.2,702.08" stroke="#b4b4b4" stroke-width="2.1" fill="none"/><g fill="#b2b2b2"><rect x="174" y="690.2800000000001" width="11" height="1.9"/><rect x="174" y="690.2800000000001" width="1.5" height="3.6"/><rect x="183.5" y="690.2800000000001" width="1.5" height="3.6"/><rect x="178.4" y="690.2800000000001" width="2.2" height="12.4"/><rect x="176.3" y="701.1800000000001" width="6.4" height="1.5"/></g><path d="M476.40000000000003,696.3800000000001 A6.2,6.6 0 0 1 488.8,696.3800000000001 Z" fill="#e2e2e2"/><circle cx="480.20000000000005" cy="693.7800000000001" r="1.5" fill="#161616"/><circle cx="485.0" cy="693.7800000000001" r="1.5" fill="#161616"/><rect x="481.1" y="695.1800000000001" width="3" height="7.4" rx="1.2" fill="#e2e2e2"/><rect x="475.0" y="698.1800000000001" width="5.4" height="1.5" fill="#e2e2e2"/><rect x="484.8" y="698.1800000000001" width="5.4" height="1.5" fill="#e2e2e2"/><circle cx="501.5" cy="696.58" r="2.2" fill="none" stroke="#777" stroke-width="1.1"/><path d="M504.7,696.58 L506.7,696.58" stroke="#777" stroke-width="1.1"/><path d="M503.76274169979695,698.842741699797 L505.17695526217005,700.2569552621701" stroke="#777" stroke-width="1.1"/><path d="M501.5,699.7800000000001 L501.5,701.7800000000001" stroke="#777" stroke-width="1.1"/><path d="M499.23725830020305,698.842741699797 L497.82304473782995,700.2569552621701" stroke="#777" stroke-width="1.1"/><path d="M498.3,696.58 L496.3,696.58" stroke="#777" stroke-width="1.1"/><path d="M499.23725830020305,694.3172583002031 L497.82304473782995,692.90304473783" stroke="#777" stroke-width="1.1"/><path d="M501.5,693.38 L501.5,691.38" stroke="#777" stroke-width="1.1"/><path d="M503.76274169979695,694.3172583002031 L505.17695526217005,692.90304473783" stroke="#777" stroke-width="1.1"/><path d="M514.4,702.88 L526.0,690.2800000000001" stroke="#cfcfcf" stroke-width="1.6"/><rect x="606.6999999999999" y="686.98" width="15" height="20.21" fill="#151515"/><g stroke="#b8b8b8" stroke-width="1.2" fill="none" stroke-linejoin="round"><polygon points="614.0,691.48 619.1,694.2 619.1,698.96 614.0,701.6800000000001 608.9,698.96 608.9,694.2"/><path d="M608.9,694.2 L614.0,696.9200000000001 L619.1,694.2 M614.0,696.9200000000001 L614.0,701.6800000000001"/></g><polyline points="659.19,697.98 658.93,698.19 658.60,698.35 658.23,698.43 657.82,698.44 657.39,698.35 656.98,698.16 656.59,697.87 656.26,697.49 656.00,697.03 655.84,696.50 655.79,695.93 655.86,695.33 656.07,694.74 656.40,694.18 656.86,693.69 657.42,693.28 658.09,692.99 658.82,692.83 659.59,692.83 660.37,692.99 661.12,693.32 661.81,693.80 662.41,694.43 662.88,695.19 663.19,696.06 663.33,696.99 663.27,697.96 663.01,698.92 662.56,699.82 661.91,700.64 661.10,701.33 660.14,701.85 659.07,702.17 657.94,702.28 656.78,702.15 655.65,701.78 654.59,701.19 653.66,700.38 652.89,699.37 652.33,698.21 652.01,696.94 651.94,695.61 652.15,694.26 652.64,692.96 653.38,691.77 654.37,690.72 655.57,689.89 656.93,689.30 658.41,688.99 659.94,688.98 661.47,689.28 662.93,689.89 664.26,690.80 665.40,691.97" stroke="#9c9c9c" stroke-width="1.4" fill="none"/><path d="M763,693.58 L768.5,699.08 L774,693.58" stroke="#e8e8e8" stroke-width="2" fill="none"/><path d="M8.6,717.79 Q15.5,709.5899999999999 22.4,717.79 Q15.5,725.99 8.6,717.79 Z" fill="#cdcdcd"/><circle cx="15.5" cy="717.79" r="2.9" fill="#151515"/><circle cx="15.5" cy="717.79" r="1.3" fill="#555"/><path d="M93.2,713.29 L97.7,718.29 L93.2,723.29" stroke="#b4b4b4" stroke-width="2.1" fill="none"/><g fill="#b2b2b2"><rect x="174" y="711.49" width="11" height="1.9"/><rect x="174" y="711.49" width="1.5" height="3.6"/><rect x="183.5" y="711.49" width="1.5" height="3.6"/><rect x="178.4" y="711.49" width="2.2" height="12.4"/><rect x="176.3" y="722.39" width="6.4" height="1.5"/></g><path d="M476.40000000000003,717.59 A6.2,6.6 0 0 1 488.8,717.59 Z" fill="#e2e2e2"/><circle cx="480.20000000000005" cy="714.99" r="1.5" fill="#161616"/><circle cx="485.0" cy="714.99" r="1.5" fill="#161616"/><rect x="481.1" y="716.39" width="3" height="7.4" rx="1.2" fill="#e2e2e2"/><rect x="475.0" y="719.39" width="5.4" height="1.5" fill="#e2e2e2"/><rect x="484.8" y="719.39" width="5.4" height="1.5" fill="#e2e2e2"/><circle cx="501.5" cy="717.79" r="2.2" fill="none" stroke="#777" stroke-width="1.1"/><path d="M504.7,717.79 L506.7,717.79" stroke="#777" stroke-width="1.1"/><path d="M503.76274169979695,720.0527416997969 L505.17695526217005,721.46695526217" stroke="#777" stroke-width="1.1"/><path d="M501.5,720.99 L501.5,722.99" stroke="#777" stroke-width="1.1"/><path d="M499.23725830020305,720.0527416997969 L497.82304473782995,721.46695526217" stroke="#777" stroke-width="1.1"/><path d="M498.3,717.79 L496.3,717.79" stroke="#777" stroke-width="1.1"/><path d="M499.23725830020305,715.527258300203 L497.82304473782995,714.1130447378299" stroke="#777" stroke-width="1.1"/><path d="M501.5,714.5899999999999 L501.5,712.5899999999999" stroke="#777" stroke-width="1.1"/><path d="M503.76274169979695,715.527258300203 L505.17695526217005,714.1130447378299" stroke="#777" stroke-width="1.1"/><path d="M514.4,724.0899999999999 L526.0,711.49" stroke="#cfcfcf" stroke-width="1.6"/><rect x="606.6999999999999" y="708.1899999999999" width="15" height="20.21" fill="#151515"/><g stroke="#b8b8b8" stroke-width="1.2" fill="none" stroke-linejoin="round"><polygon points="614.0,712.6899999999999 619.1,715.41 619.1,720.17 614.0,722.89 608.9,720.17 608.9,715.41"/><path d="M608.9,715.41 L614.0,718.13 L619.1,715.41 M614.0,718.13 L614.0,722.89"/></g><polyline points="659.19,719.19 658.93,719.40 658.60,719.56 658.23,719.64 657.82,719.65 657.39,719.56 656.98,719.37 656.59,719.08 656.26,718.70 656.00,718.24 655.84,717.71 655.79,717.14 655.86,716.54 656.07,715.95 656.40,715.39 656.86,714.90 657.42,714.49 658.09,714.20 658.82,714.04 659.59,714.04 660.37,714.20 661.12,714.53 661.81,715.01 662.41,715.64 662.88,716.40 663.19,717.27 663.33,718.20 663.27,719.17 663.01,720.13 662.56,721.03 661.91,721.85 661.10,722.54 660.14,723.06 659.07,723.38 657.94,723.49 656.78,723.36 655.65,722.99 654.59,722.40 653.66,721.59 652.89,720.58 652.33,719.42 652.01,718.15 651.94,716.82 652.15,715.47 652.64,714.17 653.38,712.98 654.37,711.93 655.57,711.10 656.93,710.51 658.41,710.20 659.94,710.19 661.47,710.49 662.93,711.10 664.26,712.01 665.40,713.18" stroke="#9c9c9c" stroke-width="1.4" fill="none"/><path d="M763,714.79 L768.5,720.29 L774,714.79" stroke="#e8e8e8" stroke-width="2" fill="none"/><path d="M8.6,739.0 Q15.5,730.8 22.4,739.0 Q15.5,747.2 8.6,739.0 Z" fill="#cdcdcd"/><circle cx="15.5" cy="739.0" r="2.9" fill="#151515"/><circle cx="15.5" cy="739.0" r="1.3" fill="#555"/><path d="M93.2,734.5 L97.7,739.5 L93.2,744.5" stroke="#b4b4b4" stroke-width="2.1" fill="none"/><g fill="#b2b2b2"><rect x="174" y="732.7" width="11" height="1.9"/><rect x="174" y="732.7" width="1.5" height="3.6"/><rect x="183.5" y="732.7" width="1.5" height="3.6"/><rect x="178.4" y="732.7" width="2.2" height="12.4"/><rect x="176.3" y="743.6" width="6.4" height="1.5"/></g><path d="M476.40000000000003,738.8000000000001 A6.2,6.6 0 0 1 488.8,738.8000000000001 Z" fill="#e2e2e2"/><circle cx="480.20000000000005" cy="736.2" r="1.5" fill="#161616"/><circle cx="485.0" cy="736.2" r="1.5" fill="#161616"/><rect x="481.1" y="737.6" width="3" height="7.4" rx="1.2" fill="#e2e2e2"/><rect x="475.0" y="740.6" width="5.4" height="1.5" fill="#e2e2e2"/><rect x="484.8" y="740.6" width="5.4" height="1.5" fill="#e2e2e2"/><circle cx="501.5" cy="739.0" r="2.2" fill="none" stroke="#777" stroke-width="1.1"/><path d="M504.7,739.0 L506.7,739.0" stroke="#777" stroke-width="1.1"/><path d="M503.76274169979695,741.262741699797 L505.17695526217005,742.67695526217" stroke="#777" stroke-width="1.1"/><path d="M501.5,742.2 L501.5,744.2" stroke="#777" stroke-width="1.1"/><path d="M499.23725830020305,741.262741699797 L497.82304473782995,742.67695526217" stroke="#777" stroke-width="1.1"/><path d="M498.3,739.0 L496.3,739.0" stroke="#777" stroke-width="1.1"/><path d="M499.23725830020305,736.737258300203 L497.82304473782995,735.32304473783" stroke="#777" stroke-width="1.1"/><path d="M501.5,735.8 L501.5,733.8" stroke="#777" stroke-width="1.1"/><path d="M503.76274169979695,736.737258300203 L505.17695526217005,735.32304473783" stroke="#777" stroke-width="1.1"/><path d="M514.4,745.3 L526.0,732.7" stroke="#cfcfcf" stroke-width="1.6"/><rect x="606.6999999999999" y="729.4" width="15" height="20.21" fill="#151515"/><g stroke="#b8b8b8" stroke-width="1.2" fill="none" stroke-linejoin="round"><polygon points="614.0,733.9 619.1,736.62 619.1,741.38 614.0,744.1 608.9,741.38 608.9,736.62"/><path d="M608.9,736.62 L614.0,739.34 L619.1,736.62 M614.0,739.34 L614.0,744.1"/></g><polyline points="659.19,740.40 658.93,740.61 658.60,740.77 658.23,740.85 657.82,740.86 657.39,740.77 656.98,740.58 656.59,740.29 656.26,739.91 656.00,739.45 655.84,738.92 655.79,738.35 655.86,737.75 656.07,737.16 656.40,736.60 656.86,736.11 657.42,735.70 658.09,735.41 658.82,735.25 659.59,735.25 660.37,735.41 661.12,735.74 661.81,736.22 662.41,736.85 662.88,737.61 663.19,738.48 663.33,739.41 663.27,740.38 663.01,741.34 662.56,742.24 661.91,743.06 661.10,743.75 660.14,744.27 659.07,744.59 657.94,744.70 656.78,744.57 655.65,744.20 654.59,743.61 653.66,742.80 652.89,741.79 652.33,740.63 652.01,739.36 651.94,738.03 652.15,736.68 652.64,735.38 653.38,734.19 654.37,733.14 655.57,732.31 656.93,731.72 658.41,731.41 659.94,731.40 661.47,731.70 662.93,732.31 664.26,733.22 665.40,734.39" stroke="#9c9c9c" stroke-width="1.4" fill="none"/><path d="M763,736.0 L768.5,741.5 L774,736.0" stroke="#e8e8e8" stroke-width="2" fill="none"/><path d="M8.6,760.2099999999999 Q15.5,752.0099999999999 22.4,760.2099999999999 Q15.5,768.41 8.6,760.2099999999999 Z" fill="#cdcdcd"/><circle cx="15.5" cy="760.2099999999999" r="2.9" fill="#151515"/><circle cx="15.5" cy="760.2099999999999" r="1.3" fill="#555"/><path d="M93.2,755.7099999999999 L97.7,760.7099999999999 L93.2,765.7099999999999" stroke="#b4b4b4" stroke-width="2.1" fill="none"/><g fill="#b2b2b2"><rect x="174" y="753.91" width="11" height="1.9"/><rect x="174" y="753.91" width="1.5" height="3.6"/><rect x="183.5" y="753.91" width="1.5" height="3.6"/><rect x="178.4" y="753.91" width="2.2" height="12.4"/><rect x="176.3" y="764.81" width="6.4" height="1.5"/></g><path d="M476.40000000000003,760.01 A6.2,6.6 0 0 1 488.8,760.01 Z" fill="#e2e2e2"/><circle cx="480.20000000000005" cy="757.41" r="1.5" fill="#161616"/><circle cx="485.0" cy="757.41" r="1.5" fill="#161616"/><rect x="481.1" y="758.81" width="3" height="7.4" rx="1.2" fill="#e2e2e2"/><rect x="475.0" y="761.81" width="5.4" height="1.5" fill="#e2e2e2"/><rect x="484.8" y="761.81" width="5.4" height="1.5" fill="#e2e2e2"/><circle cx="501.5" cy="760.2099999999999" r="2.2" fill="none" stroke="#777" stroke-width="1.1"/><path d="M504.7,760.2099999999999 L506.7,760.2099999999999" stroke="#777" stroke-width="1.1"/><path d="M503.76274169979695,762.4727416997969 L505.17695526217005,763.88695526217" stroke="#777" stroke-width="1.1"/><path d="M501.5,763.41 L501.5,765.41" stroke="#777" stroke-width="1.1"/><path d="M499.23725830020305,762.4727416997969 L497.82304473782995,763.88695526217" stroke="#777" stroke-width="1.1"/><path d="M498.3,760.2099999999999 L496.3,760.2099999999999" stroke="#777" stroke-width="1.1"/><path d="M499.23725830020305,757.947258300203 L497.82304473782995,756.5330447378299" stroke="#777" stroke-width="1.1"/><path d="M501.5,757.0099999999999 L501.5,755.0099999999999" stroke="#777" stroke-width="1.1"/><path d="M503.76274169979695,757.947258300203 L505.17695526217005,756.5330447378299" stroke="#777" stroke-width="1.1"/><path d="M514.4,766.5099999999999 L526.0,753.91" stroke="#cfcfcf" stroke-width="1.6"/><polyline points="659.19,761.61 658.93,761.82 658.60,761.98 658.23,762.06 657.82,762.07 657.39,761.98 656.98,761.79 656.59,761.50 656.26,761.12 656.00,760.66 655.84,760.13 655.79,759.56 655.86,758.96 656.07,758.37 656.40,757.81 656.86,757.32 657.42,756.91 658.09,756.62 658.82,756.46 659.59,756.46 660.37,756.62 661.12,756.95 661.81,757.43 662.41,758.06 662.88,758.82 663.19,759.69 663.33,760.62 663.27,761.59 663.01,762.55 662.56,763.45 661.91,764.27 661.10,764.96 660.14,765.48 659.07,765.80 657.94,765.91 656.78,765.78 655.65,765.41 654.59,764.82 653.66,764.01 652.89,763.00 652.33,761.84 652.01,760.57 651.94,759.24 652.15,757.89 652.64,756.59 653.38,755.40 654.37,754.35 655.57,753.52 656.93,752.93 658.41,752.62 659.94,752.61 661.47,752.91 662.93,753.52 664.26,754.43 665.40,755.60" stroke="#9c9c9c" stroke-width="1.4" fill="none"/><path d="M763,757.2099999999999 L768.5,762.7099999999999 L774,757.2099999999999" stroke="#e8e8e8" stroke-width="2" fill="none"/><path d="M8.6,781.42 Q15.5,773.2199999999999 22.4,781.42 Q15.5,789.62 8.6,781.42 Z" fill="#cdcdcd"/><circle cx="15.5" cy="781.42" r="2.9" fill="#151515"/><circle cx="15.5" cy="781.42" r="1.3" fill="#555"/><path d="M93.2,776.92 L97.7,781.92 L93.2,786.92" stroke="#b4b4b4" stroke-width="2.1" fill="none"/><g fill="#b2b2b2"><rect x="174" y="775.12" width="11" height="1.9"/><rect x="174" y="775.12" width="1.5" height="3.6"/><rect x="183.5" y="775.12" width="1.5" height="3.6"/><rect x="178.4" y="775.12" width="2.2" height="12.4"/><rect x="176.3" y="786.02" width="6.4" height="1.5"/></g><path d="M476.40000000000003,781.22 A6.2,6.6 0 0 1 488.8,781.22 Z" fill="#e2e2e2"/><circle cx="480.20000000000005" cy="778.62" r="1.5" fill="#161616"/><circle cx="485.0" cy="778.62" r="1.5" fill="#161616"/><rect x="481.1" y="780.02" width="3" height="7.4" rx="1.2" fill="#e2e2e2"/><rect x="475.0" y="783.02" width="5.4" height="1.5" fill="#e2e2e2"/><rect x="484.8" y="783.02" width="5.4" height="1.5" fill="#e2e2e2"/><circle cx="501.5" cy="781.42" r="2.2" fill="none" stroke="#777" stroke-width="1.1"/><path d="M504.7,781.42 L506.7,781.42" stroke="#777" stroke-width="1.1"/><path d="M503.76274169979695,783.6827416997969 L505.17695526217005,785.09695526217" stroke="#777" stroke-width="1.1"/><path d="M501.5,784.62 L501.5,786.62" stroke="#777" stroke-width="1.1"/><path d="M499.23725830020305,783.6827416997969 L497.82304473782995,785.09695526217" stroke="#777" stroke-width="1.1"/><path d="M498.3,781.42 L496.3,781.42" stroke="#777" stroke-width="1.1"/><path d="M499.23725830020305,779.157258300203 L497.82304473782995,777.7430447378299" stroke="#777" stroke-width="1.1"/><path d="M501.5,778.2199999999999 L501.5,776.2199999999999" stroke="#777" stroke-width="1.1"/><path d="M503.76274169979695,779.157258300203 L505.17695526217005,777.7430447378299" stroke="#777" stroke-width="1.1"/><path d="M514.4,787.7199999999999 L526.0,775.12" stroke="#cfcfcf" stroke-width="1.6"/><polyline points="659.19,782.82 658.93,783.03 658.60,783.19 658.23,783.27 657.82,783.28 657.39,783.19 656.98,783.00 656.59,782.71 656.26,782.33 656.00,781.87 655.84,781.34 655.79,780.77 655.86,780.17 656.07,779.58 656.40,779.02 656.86,778.53 657.42,778.12 658.09,777.83 658.82,777.67 659.59,777.67 660.37,777.83 661.12,778.16 661.81,778.64 662.41,779.27 662.88,780.03 663.19,780.90 663.33,781.83 663.27,782.80 663.01,783.76 662.56,784.66 661.91,785.48 661.10,786.17 660.14,786.69 659.07,787.01 657.94,787.12 656.78,786.99 655.65,786.62 654.59,786.03 653.66,785.22 652.89,784.21 652.33,783.05 652.01,781.78 651.94,780.45 652.15,779.10 652.64,777.80 653.38,776.61 654.37,775.56 655.57,774.73 656.93,774.14 658.41,773.83 659.94,773.82 661.47,774.12 662.93,774.73 664.26,775.64 665.40,776.81" stroke="#9c9c9c" stroke-width="1.4" fill="none"/><path d="M763,778.42 L768.5,783.92 L774,778.42" stroke="#e8e8e8" stroke-width="2" fill="none"/><path d="M8.6,802.63 Q15.5,794.43 22.4,802.63 Q15.5,810.83 8.6,802.63 Z" fill="#cdcdcd"/><circle cx="15.5" cy="802.63" r="2.9" fill="#151515"/><circle cx="15.5" cy="802.63" r="1.3" fill="#555"/><path d="M93.2,798.13 L97.7,803.13 L93.2,808.13" stroke="#b4b4b4" stroke-width="2.1" fill="none"/><g fill="#b2b2b2"><rect x="174" y="796.33" width="11" height="1.9"/><rect x="174" y="796.33" width="1.5" height="3.6"/><rect x="183.5" y="796.33" width="1.5" height="3.6"/><rect x="178.4" y="796.33" width="2.2" height="12.4"/><rect x="176.3" y="807.23" width="6.4" height="1.5"/></g><path d="M476.40000000000003,802.4300000000001 A6.2,6.6 0 0 1 488.8,802.4300000000001 Z" fill="#e2e2e2"/><circle cx="480.20000000000005" cy="799.83" r="1.5" fill="#161616"/><circle cx="485.0" cy="799.83" r="1.5" fill="#161616"/><rect x="481.1" y="801.23" width="3" height="7.4" rx="1.2" fill="#e2e2e2"/><rect x="475.0" y="804.23" width="5.4" height="1.5" fill="#e2e2e2"/><rect x="484.8" y="804.23" width="5.4" height="1.5" fill="#e2e2e2"/><circle cx="501.5" cy="802.63" r="2.2" fill="none" stroke="#777" stroke-width="1.1"/><path d="M504.7,802.63 L506.7,802.63" stroke="#777" stroke-width="1.1"/><path d="M503.76274169979695,804.8927416997969 L505.17695526217005,806.30695526217" stroke="#777" stroke-width="1.1"/><path d="M501.5,805.83 L501.5,807.83" stroke="#777" stroke-width="1.1"/><path d="M499.23725830020305,804.8927416997969 L497.82304473782995,806.30695526217" stroke="#777" stroke-width="1.1"/><path d="M498.3,802.63 L496.3,802.63" stroke="#777" stroke-width="1.1"/><path d="M499.23725830020305,800.367258300203 L497.82304473782995,798.9530447378299" stroke="#777" stroke-width="1.1"/><path d="M501.5,799.43 L501.5,797.43" stroke="#777" stroke-width="1.1"/><path d="M503.76274169979695,800.367258300203 L505.17695526217005,798.9530447378299" stroke="#777" stroke-width="1.1"/><path d="M514.4,808.93 L526.0,796.33" stroke="#cfcfcf" stroke-width="1.6"/><polyline points="659.19,804.03 658.93,804.24 658.60,804.40 658.23,804.48 657.82,804.49 657.39,804.40 656.98,804.21 656.59,803.92 656.26,803.54 656.00,803.08 655.84,802.55 655.79,801.98 655.86,801.38 656.07,800.79 656.40,800.23 656.86,799.74 657.42,799.33 658.09,799.04 658.82,798.88 659.59,798.88 660.37,799.04 661.12,799.37 661.81,799.85 662.41,800.48 662.88,801.24 663.19,802.11 663.33,803.04 663.27,804.01 663.01,804.97 662.56,805.87 661.91,806.69 661.10,807.38 660.14,807.90 659.07,808.22 657.94,808.33 656.78,808.20 655.65,807.83 654.59,807.24 653.66,806.43 652.89,805.42 652.33,804.26 652.01,802.99 651.94,801.66 652.15,800.31 652.64,799.01 653.38,797.82 654.37,796.77 655.57,795.94 656.93,795.35 658.41,795.04 659.94,795.03 661.47,795.33 662.93,795.94 664.26,796.85 665.40,798.02" stroke="#9c9c9c" stroke-width="1.4" fill="none"/><path d="M763,799.63 L768.5,805.13 L774,799.63" stroke="#e8e8e8" stroke-width="2" fill="none"/><path d="M8.6,823.84 Q15.5,815.64 22.4,823.84 Q15.5,832.0400000000001 8.6,823.84 Z" fill="#cdcdcd"/><circle cx="15.5" cy="823.84" r="2.9" fill="#151515"/><circle cx="15.5" cy="823.84" r="1.3" fill="#555"/><path d="M93.2,819.34 L97.7,824.34 L93.2,829.34" stroke="#b4b4b4" stroke-width="2.1" fill="none"/><polygon points="179.50,816.84 181.50,821.89 186.92,822.23 182.73,825.69 184.08,830.95 179.50,828.04 174.92,830.95 176.27,825.69 172.08,822.23 177.50,821.89" fill="#b0b0b0"/><path d="M476.40000000000003,823.6400000000001 A6.2,6.6 0 0 1 488.8,823.6400000000001 Z" fill="#e2e2e2"/><circle cx="480.20000000000005" cy="821.0400000000001" r="1.5" fill="#161616"/><circle cx="485.0" cy="821.0400000000001" r="1.5" fill="#161616"/><rect x="481.1" y="822.44" width="3" height="7.4" rx="1.2" fill="#e2e2e2"/><rect x="475.0" y="825.44" width="5.4" height="1.5" fill="#e2e2e2"/><rect x="484.8" y="825.44" width="5.4" height="1.5" fill="#e2e2e2"/><circle cx="501.5" cy="823.84" r="2.2" fill="none" stroke="#777" stroke-width="1.1"/><path d="M504.7,823.84 L506.7,823.84" stroke="#777" stroke-width="1.1"/><path d="M503.76274169979695,826.102741699797 L505.17695526217005,827.5169552621701" stroke="#777" stroke-width="1.1"/><path d="M501.5,827.0400000000001 L501.5,829.0400000000001" stroke="#777" stroke-width="1.1"/><path d="M499.23725830020305,826.102741699797 L497.82304473782995,827.5169552621701" stroke="#777" stroke-width="1.1"/><path d="M498.3,823.84 L496.3,823.84" stroke="#777" stroke-width="1.1"/><path d="M499.23725830020305,821.5772583002031 L497.82304473782995,820.16304473783" stroke="#777" stroke-width="1.1"/><path d="M501.5,820.64 L501.5,818.64" stroke="#777" stroke-width="1.1"/><path d="M503.76274169979695,821.5772583002031 L505.17695526217005,820.16304473783" stroke="#777" stroke-width="1.1"/><path d="M514.4,830.14 L526.0,817.5400000000001" stroke="#cfcfcf" stroke-width="1.6"/><polyline points="659.19,825.24 658.93,825.45 658.60,825.61 658.23,825.69 657.82,825.70 657.39,825.61 656.98,825.42 656.59,825.13 656.26,824.75 656.00,824.29 655.84,823.76 655.79,823.19 655.86,822.59 656.07,822.00 656.40,821.44 656.86,820.95 657.42,820.54 658.09,820.25 658.82,820.09 659.59,820.09 660.37,820.25 661.12,820.58 661.81,821.06 662.41,821.69 662.88,822.45 663.19,823.32 663.33,824.25 663.27,825.22 663.01,826.18 662.56,827.08 661.91,827.90 661.10,828.59 660.14,829.11 659.07,829.43 657.94,829.54 656.78,829.41 655.65,829.04 654.59,828.45 653.66,827.64 652.89,826.63 652.33,825.47 652.01,824.20 651.94,822.87 652.15,821.52 652.64,820.22 653.38,819.03 654.37,817.98 655.57,817.15 656.93,816.56 658.41,816.25 659.94,816.24 661.47,816.54 662.93,817.15 664.26,818.06 665.40,819.23" stroke="#9c9c9c" stroke-width="1.4" fill="none"/><path d="M763,820.84 L768.5,826.34 L774,820.84" stroke="#e8e8e8" stroke-width="2" fill="none"/><path d="M819,841.95 L819,835.95 L825,835.95 Q820.5,836.45 820.2,841.95 Z" fill="#3b3729"/><path d="M8.6,845.0500000000001 Q15.5,836.85 22.4,845.0500000000001 Q15.5,853.2500000000001 8.6,845.0500000000001 Z" fill="#cdcdcd"/><circle cx="15.5" cy="845.0500000000001" r="2.9" fill="#151515"/><circle cx="15.5" cy="845.0500000000001" r="1.3" fill="#555"/><path d="M93.2,840.5500000000001 L97.7,845.5500000000001 L93.2,850.5500000000001" stroke="#b4b4b4" stroke-width="2.1" fill="none"/><rect x="171" y="837.0500000000001" width="17.5" height="16" fill="#888"/><rect x="173" y="838.5500000000001" width="13.5" height="13" fill="#d0d0d0"/><rect x="171.6" y="838.0500000000001" width="1" height="1.5" fill="#222"/><rect x="187" y="838.0500000000001" width="1" height="1.5" fill="#222"/><rect x="171.6" y="840.95" width="1" height="1.5" fill="#222"/><rect x="187" y="840.95" width="1" height="1.5" fill="#222"/><rect x="171.6" y="843.85" width="1" height="1.5" fill="#222"/><rect x="187" y="843.85" width="1" height="1.5" fill="#222"/><rect x="171.6" y="846.7500000000001" width="1" height="1.5" fill="#222"/><rect x="187" y="846.7500000000001" width="1" height="1.5" fill="#222"/><rect x="171.6" y="849.6500000000001" width="1" height="1.5" fill="#222"/><rect x="187" y="849.6500000000001" width="1" height="1.5" fill="#222"/><circle cx="177.5" cy="842.5500000000001" r="2.8" fill="#3a7de8"/><rect x="179" y="842.2500000000001" width="5" height="5" fill="#e23b30"/><polygon points="176,850.0500000000001 181,850.0500000000001 178.5,845.5500000000001" fill="#27a64d"/><path d="M476.40000000000003,844.8500000000001 A6.2,6.6 0 0 1 488.8,844.8500000000001 Z" fill="#e2e2e2"/><circle cx="480.20000000000005" cy="842.2500000000001" r="1.5" fill="#161616"/><circle cx="485.0" cy="842.2500000000001" r="1.5" fill="#161616"/><rect x="481.1" y="843.6500000000001" width="3" height="7.4" rx="1.2" fill="#e2e2e2"/><rect x="475.0" y="846.6500000000001" width="5.4" height="1.5" fill="#e2e2e2"/><rect x="484.8" y="846.6500000000001" width="5.4" height="1.5" fill="#e2e2e2"/><path d="M514.4,851.35 L526.0,838.7500000000001" stroke="#cfcfcf" stroke-width="1.6"/><rect x="606.6999999999999" y="835.45" width="15" height="20.21" fill="#151515"/><g stroke="#b8b8b8" stroke-width="1.2" fill="none" stroke-linejoin="round"><polygon points="614.0,839.95 619.1,842.6700000000001 619.1,847.4300000000001 614.0,850.1500000000001 608.9,847.4300000000001 608.9,842.6700000000001"/><path d="M608.9,842.6700000000001 L614.0,845.3900000000001 L619.1,842.6700000000001 M614.0,845.3900000000001 L614.0,850.1500000000001"/></g><polyline points="659.19,846.45 658.93,846.66 658.60,846.82 658.23,846.90 657.82,846.91 657.39,846.82 656.98,846.63 656.59,846.34 656.26,845.96 656.00,845.50 655.84,844.97 655.79,844.40 655.86,843.80 656.07,843.21 656.40,842.65 656.86,842.16 657.42,841.75 658.09,841.46 658.82,841.30 659.59,841.30 660.37,841.46 661.12,841.79 661.81,842.27 662.41,842.90 662.88,843.66 663.19,844.53 663.33,845.46 663.27,846.43 663.01,847.39 662.56,848.29 661.91,849.11 661.10,849.80 660.14,850.32 659.07,850.64 657.94,850.75 656.78,850.62 655.65,850.25 654.59,849.66 653.66,848.85 652.89,847.84 652.33,846.68 652.01,845.41 651.94,844.08 652.15,842.73 652.64,841.43 653.38,840.24 654.37,839.19 655.57,838.36 656.93,837.77 658.41,837.46 659.94,837.45 661.47,837.75 662.93,838.36 664.26,839.27 665.40,840.44" stroke="#9c9c9c" stroke-width="1.4" fill="none"/><path d="M763,842.0500000000001 L768.5,847.5500000000001 L774,842.0500000000001" stroke="#e8e8e8" stroke-width="2" fill="none"/><path d="M819,863.16 L819,857.16 L825,857.16 Q820.5,857.66 820.2,863.16 Z" fill="#3b3729"/><path d="M8.6,866.26 Q15.5,858.06 22.4,866.26 Q15.5,874.46 8.6,866.26 Z" fill="#cdcdcd"/><circle cx="15.5" cy="866.26" r="2.9" fill="#151515"/><circle cx="15.5" cy="866.26" r="1.3" fill="#555"/><path d="M93.2,861.76 L97.7,866.76 L93.2,871.76" stroke="#b4b4b4" stroke-width="2.1" fill="none"/><rect x="171" y="858.26" width="17.5" height="16" fill="#888"/><rect x="173" y="859.76" width="13.5" height="13" fill="#d0d0d0"/><rect x="171.6" y="859.26" width="1" height="1.5" fill="#222"/><rect x="187" y="859.26" width="1" height="1.5" fill="#222"/><rect x="171.6" y="862.16" width="1" height="1.5" fill="#222"/><rect x="187" y="862.16" width="1" height="1.5" fill="#222"/><rect x="171.6" y="865.06" width="1" height="1.5" fill="#222"/><rect x="187" y="865.06" width="1" height="1.5" fill="#222"/><rect x="171.6" y="867.96" width="1" height="1.5" fill="#222"/><rect x="187" y="867.96" width="1" height="1.5" fill="#222"/><rect x="171.6" y="870.86" width="1" height="1.5" fill="#222"/><rect x="187" y="870.86" width="1" height="1.5" fill="#222"/><circle cx="177.5" cy="863.76" r="2.8" fill="#3a7de8"/><rect x="179" y="863.46" width="5" height="5" fill="#e23b30"/><polygon points="176,871.26 181,871.26 178.5,866.76" fill="#27a64d"/><path d="M476.40000000000003,866.0600000000001 A6.2,6.6 0 0 1 488.8,866.0600000000001 Z" fill="#e2e2e2"/><circle cx="480.20000000000005" cy="863.46" r="1.5" fill="#161616"/><circle cx="485.0" cy="863.46" r="1.5" fill="#161616"/><rect x="481.1" y="864.86" width="3" height="7.4" rx="1.2" fill="#e2e2e2"/><rect x="475.0" y="867.86" width="5.4" height="1.5" fill="#e2e2e2"/><rect x="484.8" y="867.86" width="5.4" height="1.5" fill="#e2e2e2"/><path d="M514.4,872.56 L526.0,859.96" stroke="#cfcfcf" stroke-width="1.6"/><rect x="606.6999999999999" y="856.66" width="15" height="20.21" fill="#151515"/><g stroke="#b8b8b8" stroke-width="1.2" fill="none" stroke-linejoin="round"><polygon points="614.0,861.16 619.1,863.88 619.1,868.64 614.0,871.36 608.9,868.64 608.9,863.88"/><path d="M608.9,863.88 L614.0,866.6 L619.1,863.88 M614.0,866.6 L614.0,871.36"/></g><polyline points="659.19,867.66 658.93,867.87 658.60,868.03 658.23,868.11 657.82,868.12 657.39,868.03 656.98,867.84 656.59,867.55 656.26,867.17 656.00,866.71 655.84,866.18 655.79,865.61 655.86,865.01 656.07,864.42 656.40,863.86 656.86,863.37 657.42,862.96 658.09,862.67 658.82,862.51 659.59,862.51 660.37,862.67 661.12,863.00 661.81,863.48 662.41,864.11 662.88,864.87 663.19,865.74 663.33,866.67 663.27,867.64 663.01,868.60 662.56,869.50 661.91,870.32 661.10,871.01 660.14,871.53 659.07,871.85 657.94,871.96 656.78,871.83 655.65,871.46 654.59,870.87 653.66,870.06 652.89,869.05 652.33,867.89 652.01,866.62 651.94,865.29 652.15,863.94 652.64,862.64 653.38,861.45 654.37,860.40 655.57,859.57 656.93,858.98 658.41,858.67 659.94,858.66 661.47,858.96 662.93,859.57 664.26,860.48 665.40,861.65" stroke="#9c9c9c" stroke-width="1.4" fill="none"/><path d="M763,863.26 L768.5,868.76 L774,863.26" stroke="#e8e8e8" stroke-width="2" fill="none"/><path d="M819,884.3699999999999 L819,878.3699999999999 L825,878.3699999999999 Q820.5,878.8699999999999 820.2,884.3699999999999 Z" fill="#3b3729"/><path d="M8.6,887.4699999999999 Q15.5,879.2699999999999 22.4,887.4699999999999 Q15.5,895.67 8.6,887.4699999999999 Z" fill="#cdcdcd"/><circle cx="15.5" cy="887.4699999999999" r="2.9" fill="#151515"/><circle cx="15.5" cy="887.4699999999999" r="1.3" fill="#555"/><path d="M93.2,882.9699999999999 L97.7,887.9699999999999 L93.2,892.9699999999999" stroke="#b4b4b4" stroke-width="2.1" fill="none"/><rect x="171" y="879.4699999999999" width="17.5" height="16" fill="#888"/><rect x="173" y="880.9699999999999" width="13.5" height="13" fill="#d0d0d0"/><rect x="171.6" y="880.4699999999999" width="1" height="1.5" fill="#222"/><rect x="187" y="880.4699999999999" width="1" height="1.5" fill="#222"/><rect x="171.6" y="883.3699999999999" width="1" height="1.5" fill="#222"/><rect x="187" y="883.3699999999999" width="1" height="1.5" fill="#222"/><rect x="171.6" y="886.2699999999999" width="1" height="1.5" fill="#222"/><rect x="187" y="886.2699999999999" width="1" height="1.5" fill="#222"/><rect x="171.6" y="889.17" width="1" height="1.5" fill="#222"/><rect x="187" y="889.17" width="1" height="1.5" fill="#222"/><rect x="171.6" y="892.0699999999999" width="1" height="1.5" fill="#222"/><rect x="187" y="892.0699999999999" width="1" height="1.5" fill="#222"/><circle cx="177.5" cy="884.9699999999999" r="2.8" fill="#3a7de8"/><rect x="179" y="884.67" width="5" height="5" fill="#e23b30"/><polygon points="176,892.4699999999999 181,892.4699999999999 178.5,887.9699999999999" fill="#27a64d"/><path d="M476.40000000000003,887.27 A6.2,6.6 0 0 1 488.8,887.27 Z" fill="#e2e2e2"/><circle cx="480.20000000000005" cy="884.67" r="1.5" fill="#161616"/><circle cx="485.0" cy="884.67" r="1.5" fill="#161616"/><rect x="481.1" y="886.0699999999999" width="3" height="7.4" rx="1.2" fill="#e2e2e2"/><rect x="475.0" y="889.0699999999999" width="5.4" height="1.5" fill="#e2e2e2"/><rect x="484.8" y="889.0699999999999" width="5.4" height="1.5" fill="#e2e2e2"/><path d="M514.4,893.7699999999999 L526.0,881.17" stroke="#cfcfcf" stroke-width="1.6"/><rect x="606.6999999999999" y="877.8699999999999" width="15" height="20.21" fill="#151515"/><g stroke="#b8b8b8" stroke-width="1.2" fill="none" stroke-linejoin="round"><polygon points="614.0,882.3699999999999 619.1,885.0899999999999 619.1,889.8499999999999 614.0,892.5699999999999 608.9,889.8499999999999 608.9,885.0899999999999"/><path d="M608.9,885.0899999999999 L614.0,887.81 L619.1,885.0899999999999 M614.0,887.81 L614.0,892.5699999999999"/></g><polyline points="659.19,888.87 658.93,889.08 658.60,889.24 658.23,889.32 657.82,889.33 657.39,889.24 656.98,889.05 656.59,888.76 656.26,888.38 656.00,887.92 655.84,887.39 655.79,886.82 655.86,886.22 656.07,885.63 656.40,885.07 656.86,884.58 657.42,884.17 658.09,883.88 658.82,883.72 659.59,883.72 660.37,883.88 661.12,884.21 661.81,884.69 662.41,885.32 662.88,886.08 663.19,886.95 663.33,887.88 663.27,888.85 663.01,889.81 662.56,890.71 661.91,891.53 661.10,892.22 660.14,892.74 659.07,893.06 657.94,893.17 656.78,893.04 655.65,892.67 654.59,892.08 653.66,891.27 652.89,890.26 652.33,889.10 652.01,887.83 651.94,886.50 652.15,885.15 652.64,883.85 653.38,882.66 654.37,881.61 655.57,880.78 656.93,880.19 658.41,879.88 659.94,879.87 661.47,880.17 662.93,880.78 664.26,881.69 665.40,882.86" stroke="#9c9c9c" stroke-width="1.4" fill="none"/><path d="M763,884.4699999999999 L768.5,889.9699999999999 L774,884.4699999999999" stroke="#e8e8e8" stroke-width="2" fill="none"/><path d="M8.6,908.68 Q15.5,900.4799999999999 22.4,908.68 Q15.5,916.88 8.6,908.68 Z" fill="#cdcdcd"/><circle cx="15.5" cy="908.68" r="2.9" fill="#151515"/><circle cx="15.5" cy="908.68" r="1.3" fill="#555"/><path d="M93.2,904.18 L97.7,909.18 L93.2,914.18" stroke="#b4b4b4" stroke-width="2.1" fill="none"/><path d="M476.40000000000003,908.48 A6.2,6.6 0 0 1 488.8,908.48 Z" fill="#e2e2e2"/><circle cx="480.20000000000005" cy="905.88" r="1.5" fill="#161616"/><circle cx="485.0" cy="905.88" r="1.5" fill="#161616"/><rect x="481.1" y="907.28" width="3" height="7.4" rx="1.2" fill="#e2e2e2"/><rect x="475.0" y="910.28" width="5.4" height="1.5" fill="#e2e2e2"/><rect x="484.8" y="910.28" width="5.4" height="1.5" fill="#e2e2e2"/><path d="M514.4,914.9799999999999 L526.0,902.38" stroke="#cfcfcf" stroke-width="1.6"/><polyline points="659.19,910.08 658.93,910.29 658.60,910.45 658.23,910.53 657.82,910.54 657.39,910.45 656.98,910.26 656.59,909.97 656.26,909.59 656.00,909.13 655.84,908.60 655.79,908.03 655.86,907.43 656.07,906.84 656.40,906.28 656.86,905.79 657.42,905.38 658.09,905.09 658.82,904.93 659.59,904.93 660.37,905.09 661.12,905.42 661.81,905.90 662.41,906.53 662.88,907.29 663.19,908.16 663.33,909.09 663.27,910.06 663.01,911.02 662.56,911.92 661.91,912.74 661.10,913.43 660.14,913.95 659.07,914.27 657.94,914.38 656.78,914.25 655.65,913.88 654.59,913.29 653.66,912.48 652.89,911.47 652.33,910.31 652.01,909.04 651.94,907.71 652.15,906.36 652.64,905.06 653.38,903.87 654.37,902.82 655.57,901.99 656.93,901.40 658.41,901.09 659.94,901.08 661.47,901.38 662.93,901.99 664.26,902.90 665.40,904.07" stroke="#9c9c9c" stroke-width="1.4" fill="none"/><path d="M763,905.68 L768.5,911.18 L774,905.68" stroke="#e8e8e8" stroke-width="2" fill="none"/><rect x="606.3" y="580.7299999999999" width="15.5" height="63.03" fill="none" stroke="#d8d8d8" stroke-width="1.1" stroke-dasharray="1.2 1.2"/><rect x="606.3" y="644.3599999999999" width="15.5" height="105.45000000000002" fill="none" stroke="#d8d8d8" stroke-width="1.1"/><rect x="606.3" y="835.25" width="15.5" height="63.03" fill="none" stroke="#d8d8d8" stroke-width="1.1"/><rect x="1644.5" y="919.79" width="6" height="17.210000000000036" fill="#3a3a3a"/><rect x="1644.3" y="516.8" width="6.4" height="402.99" fill="#ffffff" opacity="0.07"/><rect x="1646.9" y="489" width="1.1" height="448" fill="#3d93f0"/><rect x="7.3" y="943" width="18" height="17.5" rx="3" fill="#3a3a3a"/><g stroke="#b0b0b0" stroke-width="1.3" fill="none"><rect x="10" y="946" width="9" height="8"/><rect x="13" y="949" width="9" height="8.5" fill="#3a3a3a"/></g><rect x="16" y="952" width="3" height="3" fill="#b0b0b0"/><g stroke="#b0b0b0" stroke-width="1.3" fill="none"><circle cx="38.5" cy="950" r="5"/><rect x="40" y="951.5" width="7.5" height="7.5" fill="#1d1d1d"/></g><g stroke="#b0b0b0" stroke-width="1.5" fill="none"><path d="M60,944.5 L57,951 L60,957.5"/><path d="M68,944.5 L71,951 L68,957.5"/></g><rect x="63.5" y="945" width="1.3" height="12" fill="#b0b0b0"/><path d="M80,957 L80,954 Q80,946 87,946 Q93,946 93,953 L93,957 Z" fill="#b0b0b0"/><path d="M92,950 L96,946 M94,953 L96.5,949" stroke="#b0b0b0" stroke-width="1.2"/><rect x="80" y="956" width="13" height="1.5" fill="#b0b0b0"/><polygon points="818,956 825,949.5 831.5,956" fill="#b8b8b8"/><circle cx="846.8" cy="951.8" r="4.5" fill="none" stroke="#c0c0c0" stroke-width="1.8"/><rect x="858.5" y="951.3" width="54.5" height="1.2" fill="#555"/><polygon points="917.5,956.5 922,951.5 925,954 930,947.5 940,956.5" fill="#c0c0c0"/></svg>
</body></html>
